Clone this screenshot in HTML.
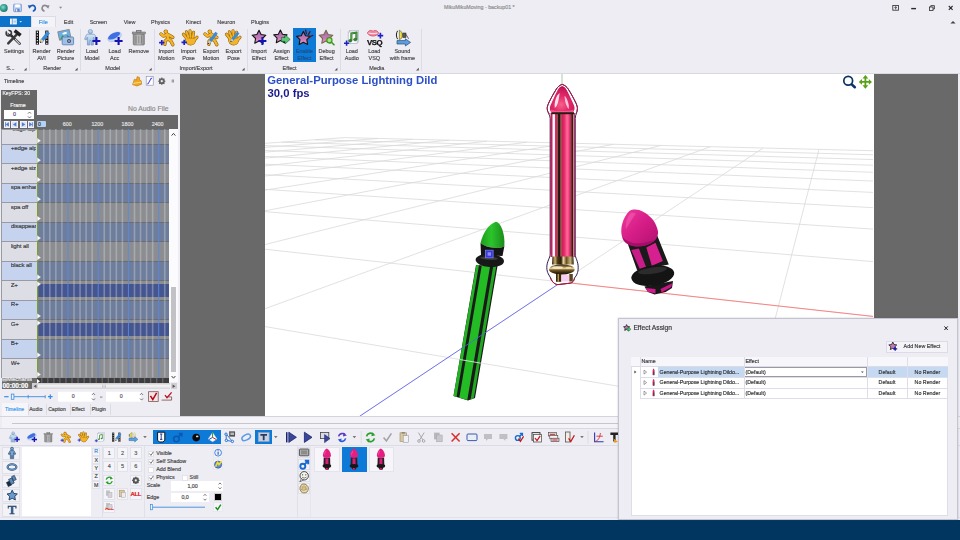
<!DOCTYPE html>
<html><head><meta charset="utf-8"><title>MikuMikuMoving</title>
<style>
html,body{margin:0;padding:0}
body{width:960px;height:540px;overflow:hidden;background:#ededf3;font-family:"Liberation Sans",sans-serif;font-size:6.4px;color:#3c3c3c;position:relative;line-height:1}
.a{position:absolute}
.t{position:absolute;white-space:nowrap;-webkit-text-stroke:.16px currentColor}
.c{position:absolute;white-space:nowrap;text-align:center;transform:translateX(-50%);-webkit-text-stroke:.16px currentColor}
svg{position:absolute;overflow:visible}
.sep{position:absolute;width:1px;background:#dcdce4}
#root{position:absolute;left:0;top:0;width:960px;height:540px;transform:translateZ(0)}
</style></head><body><div id="root">

<!-- ===== TITLE BAR ===== -->
<div id="titlebar" class="a" style="left:0;top:0;width:960px;height:16px;background:#ededf3">
<svg width="70" height="16" viewBox="0 0 70 16" style="left:0;top:0">
<defs><radialGradient id="gq" cx=".4" cy=".4" r=".7"><stop offset="0" stop-color="#8ad8c8"/><stop offset=".6" stop-color="#2a9a8a"/><stop offset="1" stop-color="#1a6a60"/></radialGradient></defs>
<circle cx="3.8" cy="8" r="3.9" fill="url(#gq)"/>
<rect x="13.6" y="4.2" width="7.8" height="7.4" rx=".6" fill="#c4d4f0" stroke="#7090d0" stroke-width=".8"/><rect x="15.2" y="4.4" width="4.6" height="2.8" fill="#fff"/><rect x="15.4" y="8.6" width="4.2" height="3" fill="#5a80c8"/><rect x="16" y="9.2" width="1.3" height="2.2" fill="#e8f0fc"/>
<path d="M30 6.8C31.6 4.6 34.6 5 35.2 7.4C35.6 9 34.8 10.4 33.4 11" fill="none" stroke="#1a5ab8" stroke-width="1.6" stroke-linecap="round"/><path d="M27.8 5.2L31.6 5.6L29.2 8.8Z" fill="#1a5ab8"/>
<path d="M47.4 6.8C45.8 4.6 42.8 5 42.2 7.4C41.8 9 42.6 10.4 44 11" fill="none" stroke="#8a8a90" stroke-width="1.6" stroke-linecap="round"/><path d="M49.6 5.2L45.8 5.6L48.2 8.8Z" fill="#8a8a90"/>
<path d="M59 6.8h3.2l-1.6 1.9z" fill="#8a8a8e"/></svg>
<div class="t" style="left:444px;top:4.6px;font-size:5.3px;color:#8c8c8c">MikuMikuMoving - backup01 *</div>
<svg width="70" height="10" viewBox="888 3 70 10" style="left:888px;top:3px"><g fill="none" stroke="#2a2a2a" stroke-width=".8">
<rect x="892.8" y="5.4" width="5.8" height="4.8"/><path d="M895.7 9.4V6.8M894.6 7.8L895.7 6.6L896.8 7.8"/>
<path d="M911.2 8.6h4.8" stroke-width="1.4"/>
<rect x="929.4" y="7" width="3.6" height="3.4"/><path d="M930.8 7V5.6H934.4V9H933"/>
<path d="M948.8 6L952.6 9.8M952.6 6L948.8 9.8" stroke-width="1.1"/></g></svg>
</div>

<!-- ===== TAB ROW ===== -->
<div id="tabrow" class="a" style="left:0;top:16px;width:960px;height:11px">
<div class="a" style="left:0;top:.2px;width:31.2px;height:10.8px;background:#0d72c9"></div>
<div class="a" style="left:31.2px;top:0;width:24.4px;height:11.5px;background:#f3f3f8;border:.6px solid #dcdce6;border-bottom:none;box-sizing:border-box"></div>
<svg width="31" height="11" viewBox="0 16 31 11" style="left:0;top:0"><rect x="10" y="18.6" width="6.8" height="5.8" fill="#f4f8fd"/><path d="M12.3 18.6v5.8" stroke="#3a7ac0" stroke-width=".7"/><path d="M13.4 20.2h2.6M13.4 21.5h2.6M13.4 22.8h2.6" stroke="#8ab0dc" stroke-width=".6"/><path d="M19.4 21.2h2.6l-1.3 1.4z" fill="#fff"/></svg>
<div class="c" style="left:43.3px;top:3.9px;font-size:5.5px;color:#3a96e8">File</div>
<div class="c" style="left:68.5px;top:3.9px;font-size:5.5px;color:#4a4a4a">Edit</div>
<div class="c" style="left:98.4px;top:3.9px;font-size:5.5px;color:#4a4a4a">Screen</div>
<div class="c" style="left:129.6px;top:3.9px;font-size:5.5px;color:#4a4a4a">View</div>
<div class="c" style="left:160.5px;top:3.9px;font-size:5.5px;color:#4a4a4a">Physics</div>
<div class="c" style="left:193.5px;top:3.9px;font-size:5.5px;color:#4a4a4a">Kinect</div>
<div class="c" style="left:226.3px;top:3.9px;font-size:5.5px;color:#4a4a4a">Neuron</div>
<div class="c" style="left:260.1px;top:3.9px;font-size:5.5px;color:#4a4a4a">Plugins</div>
<svg width="8" height="5" viewBox="0 0 8 5" style="left:948.5px;top:3.5px"><path d="M1.4 3.6L4 1L6.6 3.6Z" fill="#444"/></svg>
<div class="a" style="left:55.6px;top:10.6px;width:905px;height:.7px;background:#dcdce6"></div>
</div>

<!-- ===== RIBBON ===== -->
<div id="ribbon" class="a" style="left:0;top:27px;width:960px;height:46px;background:#ededf3;border-bottom:1px solid #d9d9e2">
<div class="a" style="left:293.2px;top:0.8999999999999986px;width:22.6px;height:34.1px;background:#0c7ad6"></div>
<div class="sep" style="left:29.2px;top:2px;height:42px"></div>
<div class="sep" style="left:80px;top:2px;height:42px"></div>
<div class="sep" style="left:153.6px;top:2px;height:42px"></div>
<div class="sep" style="left:247.3px;top:2px;height:42px"></div>
<div class="sep" style="left:340.2px;top:2px;height:42px"></div>
<div class="sep" style="left:421px;top:2px;height:42px"></div>
<div class="c" style="left:14px;top:22.200000000000003px;font-size:5.5px;color:#4a4a4a">Settings</div>
<div class="c" style="left:41.6px;top:22.200000000000003px;font-size:5.5px;color:#4a4a4a">Render</div>
<div class="c" style="left:41.6px;top:28.6px;font-size:5.5px;color:#4a4a4a">AVI</div>
<div class="c" style="left:65.7px;top:22.200000000000003px;font-size:5.5px;color:#4a4a4a">Render</div>
<div class="c" style="left:65.7px;top:28.6px;font-size:5.5px;color:#4a4a4a">Picture</div>
<div class="c" style="left:92px;top:22.200000000000003px;font-size:5.5px;color:#4a4a4a">Load</div>
<div class="c" style="left:92px;top:28.6px;font-size:5.5px;color:#4a4a4a">Model</div>
<div class="c" style="left:114.6px;top:22.200000000000003px;font-size:5.5px;color:#4a4a4a">Load</div>
<div class="c" style="left:114.6px;top:28.6px;font-size:5.5px;color:#4a4a4a">Acc</div>
<div class="c" style="left:138.8px;top:22.200000000000003px;font-size:5.5px;color:#4a4a4a">Remove</div>
<div class="c" style="left:166.2px;top:22.200000000000003px;font-size:5.5px;color:#4a4a4a">Import</div>
<div class="c" style="left:166.2px;top:28.6px;font-size:5.5px;color:#4a4a4a">Motion</div>
<div class="c" style="left:188.5px;top:22.200000000000003px;font-size:5.5px;color:#4a4a4a">Import</div>
<div class="c" style="left:188.5px;top:28.6px;font-size:5.5px;color:#4a4a4a">Pose</div>
<div class="c" style="left:211px;top:22.200000000000003px;font-size:5.5px;color:#4a4a4a">Export</div>
<div class="c" style="left:211px;top:28.6px;font-size:5.5px;color:#4a4a4a">Motion</div>
<div class="c" style="left:233.5px;top:22.200000000000003px;font-size:5.5px;color:#4a4a4a">Export</div>
<div class="c" style="left:233.5px;top:28.6px;font-size:5.5px;color:#4a4a4a">Pose</div>
<div class="c" style="left:259px;top:22.200000000000003px;font-size:5.5px;color:#4a4a4a">Import</div>
<div class="c" style="left:259px;top:28.6px;font-size:5.5px;color:#4a4a4a">Effect</div>
<div class="c" style="left:281.6px;top:22.200000000000003px;font-size:5.5px;color:#4a4a4a">Assign</div>
<div class="c" style="left:281.6px;top:28.6px;font-size:5.5px;color:#4a4a4a">Effect</div>
<div class="c" style="left:304.3px;top:22.200000000000003px;font-size:5.5px;color:#1f4e86">Enable</div>
<div class="c" style="left:304.3px;top:28.6px;font-size:5.5px;color:#1f4e86">Effect</div>
<div class="c" style="left:326.6px;top:22.200000000000003px;font-size:5.5px;color:#4a4a4a">Debug</div>
<div class="c" style="left:326.6px;top:28.6px;font-size:5.5px;color:#4a4a4a">Effect</div>
<div class="c" style="left:351.8px;top:22.200000000000003px;font-size:5.5px;color:#4a4a4a">Load</div>
<div class="c" style="left:351.8px;top:28.6px;font-size:5.5px;color:#4a4a4a">Audio</div>
<div class="c" style="left:374.3px;top:22.200000000000003px;font-size:5.5px;color:#4a4a4a">Load</div>
<div class="c" style="left:374.3px;top:28.6px;font-size:5.5px;color:#4a4a4a">VSQ</div>
<div class="c" style="left:402.4px;top:22.200000000000003px;font-size:5.5px;color:#4a4a4a">Sound</div>
<div class="c" style="left:402.4px;top:28.6px;font-size:5.5px;color:#4a4a4a">with frame</div>
<div class="c" style="left:52.2px;top:38.8px;font-size:5.5px;color:#4a4a4a">Render</div>
<div class="c" style="left:112.8px;top:38.8px;font-size:5.5px;color:#4a4a4a">Model</div>
<div class="c" style="left:196px;top:38.8px;font-size:5.5px;color:#4a4a4a">Import/Export</div>
<div class="c" style="left:289.6px;top:38.8px;font-size:5.5px;color:#4a4a4a">Effect</div>
<div class="c" style="left:376.8px;top:38.8px;font-size:5.5px;color:#4a4a4a">Media</div>
<div class="t" style="left:6.2px;top:38.8px;font-size:5.5px;color:#4a4a4a">S...</div>
<svg width="430" height="46" viewBox="0 27 430 46" style="left:0;top:0"><defs><linearGradient id="gstar" x1="0" x2="0" y1="0" y2="1"><stop offset="0" stop-color="#9a6aa8"/><stop offset=".6" stop-color="#c87ab8"/><stop offset="1" stop-color="#e8a0c8"/></linearGradient><linearGradient id="gfig" x1="0" x2="0" y1="0" y2="1"><stop offset="0" stop-color="#d8e8f8"/><stop offset="1" stop-color="#8ab0dc"/></linearGradient><linearGradient id="gtrash" x1="0" x2="1" y1="0" y2="0"><stop offset="0" stop-color="#8c8c8c"/><stop offset=".5" stop-color="#c8c8c8"/><stop offset="1" stop-color="#8a8a8a"/></linearGradient></defs><path d="M26.599999999999998 67.8V70.6H23.8Z" fill="#555"/><path d="M77.60000000000001 67.8V70.6H74.8Z" fill="#555"/><path d="M151.70000000000002 67.8V70.6H148.9Z" fill="#555"/><path d="M244.6 67.8V70.6H241.79999999999998Z" fill="#555"/><path d="M337.4 67.8V70.6H334.6Z" fill="#555"/><path d="M418.79999999999995 67.8V70.6H416.0Z" fill="#555"/><g stroke-linecap="round"><path d="M9 33.4L19.6 43.6" stroke="#2c2c2c" stroke-width="2.6"/><path d="M8.2 43.4L17.6 33.6" stroke="#3a3a3a" stroke-width="2.4"/><path d="M14.6 30.6L20.6 35.4" stroke="#222" stroke-width="3.4" stroke-linecap="butt"/><circle cx="8.8" cy="33.2" r="2.6" fill="none" stroke="#3a3a3a" stroke-width="1.7"/><path d="M7 30.4L9.6 33" stroke="#ededf3" stroke-width="1.8"/><path d="M15.4 39.4L19.4 43.6" stroke="#d8d8d8" stroke-width="1.2"/></g><rect x="35.8" y="30.6" width="12.6" height="14" fill="#f4f4f4"/><rect x="35.8" y="30.6" width="3.2" height="14" fill="#161616"/><rect x="45.2" y="30.6" width="3.2" height="14" fill="#161616"/><path d="M37.4 31.6v13M46.8 31.6v13" stroke="#e8e8e8" stroke-width="1.2" stroke-dasharray="1.3 1.5"/><path d="M40.6 42.2L48.6 32.2" stroke="#3a8ad8" stroke-width="3.4" stroke-linecap="butt"/><path d="M40.6 42.2L42.36 40.00" stroke="#f0c890" stroke-width="2.72"/><circle cx="40.6" cy="42.2" r=".7" fill="#333"/><g transform="rotate(-12 64 35)"><rect x="58.6" y="30.6" width="11.6" height="8.6" fill="#6ab0e8" stroke="#8a8a8a" stroke-width=".9"/><path d="M59.2 38.6L62.4 35L65 37.4L67 35.6L69.6 38.6Z" fill="#3a9a3a"/><ellipse cx="65" cy="33.4" rx="2.4" ry="1.1" fill="#fff"/></g><rect x="62.2" y="37" width="11.4" height="7.8" rx="1" fill="#9cc0ec" stroke="#5a7aa8" stroke-width=".8"/><rect x="63.6" y="35.8" width="3.4" height="1.6" fill="#7a9ccc"/><circle cx="69" cy="41" r="2.5" fill="#3a4a6a" stroke="#d8e4f4" stroke-width=".7"/><circle cx="69" cy="41" r="1" fill="#8ab0e0"/><g transform="translate(92 37.6)"><g fill="url(#gfig)" stroke="#7a9cc0" stroke-width=".8" stroke-linejoin="round"><circle cx="-1.6" cy="-6" r="2.1"/><path d="M-4.4 -3.4H1.2C2.4 -3.4 3 -2.8 3.4 -1.8L4.8 1.6L3 2.4L1.4 -.4V7.4H-1V3H-2.2V7.4H-4.6V-.4L-5.8 2.4L-7.4 1.6L-6 -1.8C-5.6 -2.8 -5.4 -3.4 -4.4 -3.4Z"/></g><path d="M0.40000000000000036 3.4H8.4M4.4 -0.6000000000000001V7.4" stroke="#1414b4" stroke-width="2.1" fill="none"/></g><g transform="translate(114.6 37.6)"><g transform="rotate(-27 -.4 -1.6)"><ellipse cx="-.4" cy="-.6" rx="7.4" ry="3.9" fill="#c4d8f6" stroke="#9ab4dc" stroke-width=".5"/><ellipse cx="-.4" cy="-1.9" rx="6.6" ry="2.7" fill="#3f6fe4"/><ellipse cx="-.4" cy="-.9" rx="4.6" ry="1.2" fill="#c4d8f6" opacity=".0"/></g><path d="M0 3.4H8M4 -0.6000000000000001V7.4" stroke="#1414b4" stroke-width="2.1" fill="none"/></g><rect x="133.2" y="34" width="11.2" height="11" rx="1" fill="url(#gtrash)" stroke="#6a6a6a" stroke-width=".6"/><rect x="132.2" y="32" width="13.2" height="2" fill="#9a9a9a" stroke="#666" stroke-width=".5"/><rect x="136.6" y="30.4" width="4.4" height="1.6" fill="none" stroke="#666" stroke-width=".8"/><path d="M136 35.6v8M138.8 35.6v8M141.6 35.6v8" stroke="#777" stroke-width=".8"/><g transform="translate(167.4 37.6)" fill="none" stroke-linecap="round" stroke-linejoin="round"><path d="M-0.4 -3.6L0.6 1L3.6 3.6L5.4 7M0.6 1L-2.2 3.4L-2.6 6.6M-0.2 -3L-4 -1.6L-6.4 -3.6M0 -3.2L3.2 -1.6L5.4 -0.2" stroke="#94640a" stroke-width="3.5"/><circle cx="-1.6" cy="-6" r="2.2" fill="#94640a"/><path d="M-0.4 -3.6L0.6 1L3.6 3.6L5.4 7M0.6 1L-2.2 3.4L-2.6 6.6M-0.2 -3L-4 -1.6L-6.4 -3.6M0 -3.2L3.2 -1.6L5.4 -0.2" stroke="#f4b428" stroke-width="2.3"/><circle cx="-1.6" cy="-6" r="1.6" fill="#f4b428"/></g><path d="M159.10000000000002 42.6H164.5M161.8 39.9V45.300000000000004" stroke="#2020c8" stroke-width="1.7" fill="none"/><g transform="translate(190 37.8)" fill="none" stroke-linecap="round" stroke-linejoin="round"><path d="M-3.4 0.6L-6.6 -3.6M-1.6 -0.6L-3.6 -6M0.6 -1L0 -7M2.8 -0.4L3.6 -5.6M4 3L7 -0.6" stroke="#94640a" stroke-width="3.1"/><path d="M-4 0.4C-5 4.6 -2.4 7 0.8 7C4 7 6 4.4 5 0.6Z" fill="#94640a" stroke="#94640a" stroke-width="1.2"/><path d="M-3.4 0.6L-6.6 -3.6M-1.6 -0.6L-3.6 -6M0.6 -1L0 -7M2.8 -0.4L3.6 -5.6M4 3L7 -0.6" stroke="#f4b428" stroke-width="1.9"/><path d="M-4 0.4C-5 4.6 -2.4 7 0.8 7C4 7 6 4.4 5 0.6Z" fill="#f4b428"/></g><path d="M181.5 42.4H186.89999999999998M184.2 39.699999999999996V45.1" stroke="#2020c8" stroke-width="1.7" fill="none"/><g transform="translate(211.4 37.6)" fill="none" stroke-linecap="round" stroke-linejoin="round"><path d="M-0.4 -3.6L0.6 1L3.6 3.6L5.4 7M0.6 1L-2.2 3.4L-2.6 6.6M-0.2 -3L-4 -1.6L-6.4 -3.6M0 -3.2L3.2 -1.6L5.4 -0.2" stroke="#94640a" stroke-width="3.5"/><circle cx="-1.6" cy="-6" r="2.2" fill="#94640a"/><path d="M-0.4 -3.6L0.6 1L3.6 3.6L5.4 7M0.6 1L-2.2 3.4L-2.6 6.6M-0.2 -3L-4 -1.6L-6.4 -3.6M0 -3.2L3.2 -1.6L5.4 -0.2" stroke="#f4b428" stroke-width="2.3"/><circle cx="-1.6" cy="-6" r="1.6" fill="#f4b428"/></g><path d="M208.4 43.4L216.6 32.6" stroke="#3a8ad8" stroke-width="3" stroke-linecap="butt"/><path d="M208.4 43.4L210.20 41.02" stroke="#f0c890" stroke-width="2.40"/><circle cx="208.4" cy="43.4" r=".7" fill="#333"/><g transform="translate(233 37.8)" fill="none" stroke-linecap="round" stroke-linejoin="round"><path d="M-3.4 0.6L-6.6 -3.6M-1.6 -0.6L-3.6 -6M0.6 -1L0 -7M2.8 -0.4L3.6 -5.6M4 3L7 -0.6" stroke="#94640a" stroke-width="3.1"/><path d="M-4 0.4C-5 4.6 -2.4 7 0.8 7C4 7 6 4.4 5 0.6Z" fill="#94640a" stroke="#94640a" stroke-width="1.2"/><path d="M-3.4 0.6L-6.6 -3.6M-1.6 -0.6L-3.6 -6M0.6 -1L0 -7M2.8 -0.4L3.6 -5.6M4 3L7 -0.6" stroke="#f4b428" stroke-width="1.9"/><path d="M-4 0.4C-5 4.6 -2.4 7 0.8 7C4 7 6 4.4 5 0.6Z" fill="#f4b428"/></g><path d="M231 41.4L238.4 32.6" stroke="#3a8ad8" stroke-width="2.8" stroke-linecap="butt"/><path d="M231 41.4L232.63 39.46" stroke="#f0c890" stroke-width="2.24"/><circle cx="231" cy="41.4" r=".7" fill="#333"/><path d="M259.00 30.20L261.12 34.49L265.85 35.18L262.42 38.51L263.23 43.22L259.00 41.00L254.77 43.22L255.58 38.51L252.15 35.18L256.88 34.49Z" fill="url(#gstar)" stroke="#141414" stroke-width="1.1" stroke-linejoin="round"/><path d="M258.4 41H266.4M262.4 37V45" stroke="#1414b4" stroke-width="2" fill="none"/><path d="M280.40 30.00L282.46 34.17L287.06 34.84L283.73 38.08L284.51 42.66L280.40 40.50L276.29 42.66L277.07 38.08L273.74 34.84L278.34 34.17Z" fill="url(#gstar)" stroke="#141414" stroke-width="1.1" stroke-linejoin="round"/><path d="M281.4 37.4H285V34.8L290.2 39.4L285 44V41.4H281.4Z" fill="#58c878" stroke="#1a5a2a" stroke-width=".6"/><path d="M303.40 31.40L305.52 35.69L310.25 36.38L306.82 39.71L307.63 44.42L303.40 42.20L299.17 44.42L299.98 39.71L296.55 36.38L301.28 35.69Z" fill="url(#gstar)" stroke="#141414" stroke-width="1.1" stroke-linejoin="round"/><path d="M306.4 33.6L305.6 30.2M308.4 34.6L310 31.6M309.6 36.8L312.8 35.4" stroke="#5a1420" stroke-width="1.3" stroke-linecap="round"/><path d="M326.00 30.20L328.12 34.49L332.85 35.18L329.42 38.51L330.23 43.22L326.00 41.00L321.77 43.22L322.58 38.51L319.15 35.18L323.88 34.49Z" fill="url(#gstar)" stroke="#7a6a4a" stroke-width="1.1" stroke-linejoin="round"/><circle cx="329.4" cy="40.2" r="2.6" fill="#a8e088" stroke="#3a9a1a" stroke-width="1.2"/><path d="M331.4 42.2L334 44.8" stroke="#3a9a1a" stroke-width="1.6" stroke-linecap="round"/><rect x="349.6" y="30.4" width="9" height="11.6" fill="#fff" stroke="#b0b8c8" stroke-width=".7"/><rect x="348.2" y="32" width="9" height="11.6" fill="#fcfcfc" stroke="#a8b0c0" stroke-width=".7"/><path d="M351.4 40.6V33.6L356.4 32.6V39.4" fill="none" stroke="#1a5a1a" stroke-width="1.9"/><path d="M351.4 40.6V33.6L356.4 32.6V39.4" fill="none" stroke="#4ab03a" stroke-width="1"/><ellipse cx="350.2" cy="40.8" rx="1.7" ry="1.4" fill="#2a8a2a" stroke="#1a4a1a" stroke-width=".4"/><ellipse cx="355.2" cy="39.6" rx="1.7" ry="1.4" fill="#2a8a2a" stroke="#1a4a1a" stroke-width=".4"/><path d="M344.0 43.2H349.20000000000005M346.6 40.6V45.800000000000004" stroke="#2020c8" stroke-width="1.6" fill="none"/><path d="M367.4 33C368.8 30 371.6 29.8 373 31.4C374.4 29.8 377.2 30 378.6 33C376.8 37 369.2 37 367.4 33Z" fill="#f4869e" stroke="#c43c58" stroke-width=".7"/><path d="M368.4 33.1Q373 34.4 377.6 33.1" stroke="#fff" stroke-width=".8" fill="none"/><text x="374.6" y="44.9" font-family="Liberation Sans" font-weight="bold" font-size="7.9" text-anchor="middle" fill="#111" stroke="#111" stroke-width=".25" letter-spacing="-.45">VSQ</text><path d="M377.59999999999997 35.6H383.2M380.4 32.800000000000004V38.4" stroke="#2020c8" stroke-width="1.6" fill="none"/><path d="M397.6 30.8C396 33 396 37 397.6 39.2" fill="none" stroke="#222" stroke-width="1"/><path d="M399.4 30.2C402.8 31.4 403.6 38.4 399.4 39.8Z" fill="#f0e040" stroke="#5a5a2a" stroke-width=".6"/><rect x="402.8" y="33" width="3.2" height="4.6" fill="#5a5a4a" stroke="#222" stroke-width=".5"/><path d="M406 34.4L408.6 38.8" stroke="#444" stroke-width=".8"/><path d="M397 40.6H405.4V38.8L410.6 42.4L405.4 46V44H397Z" fill="#5aa0e0" stroke="#2a4a7a" stroke-width=".7"/></svg>
</div>

<!-- ===== TIMELINE PANEL ===== -->
<div id="timeline" class="a" style="left:0;top:74px;width:178px;height:342px;background:#ededf3">
<div class="t" style="left:4px;top:4.599999999999994px;font-size:5.4px;color:#444">Timeline</div>
<svg width="44" height="12" viewBox="132 75 44 12" style="left:132px;top:1px">
<path d="M132.6 84.6L134.4 79.2L136.4 80L137.2 76.6L139.4 77.4L139.6 80.2L141.2 80.8L141.6 84.2L137 86Z" fill="#f0a820" stroke="#b87408" stroke-width=".6"/>
<path d="M133.2 83.4L141 82.2" stroke="#fff0b0" stroke-width=".7"/>
<rect x="146.2" y="76.6" width="7" height="8.6" fill="#fff" stroke="#8a8ab0" stroke-width=".6"/>
<path d="M147.2 84C149.6 84 149.6 78 152.2 78" fill="none" stroke="#4444e8" stroke-width="1.1"/>
<g transform="translate(161.8 81.2)"><circle r="2.3" fill="none" stroke="#606060" stroke-width="1.4"/><g stroke="#606060" stroke-width="1.1"><path d="M0 -3.6V3.6M-3.6 0H3.6M-2.6 -2.6L2.6 2.6M-2.6 2.6L2.6 -2.6"/></g><circle r="1.1" fill="#ededf3"/></g>
<path d="M172.2 79.5v3M173.4 79.5v3" stroke="#666" stroke-width=".7"/>
</svg>
<div class="a" style="left:1.3px;top:15.900000000000006px;width:35.4px;height:39.6px;background:#676767"></div>
<div class="t" style="left:2.4px;top:17.299999999999997px;font-size:5.2px;color:#f2f2f2">KeyFPS: 30</div>
<div class="c" style="left:18px;top:29px;font-size:5.4px;color:#f6f6f6">Frame</div>
<div class="a" style="left:3.9px;top:35.900000000000006px;width:30px;height:9.4px;background:#fff"></div>
<div class="c" style="left:14.6px;top:38.2px;font-size:5.4px;color:#5a4070">0</div>
<svg width="5" height="8" viewBox="0 0 5 8" style="left:27px;top:36.8px"><path d="M1 2.6L2.5 1L4 2.6M1 5.4L2.5 7L4 5.4" fill="none" stroke="#555" stroke-width=".8"/></svg>
<div class="a" style="left:3.9px;top:47px;width:6.1px;height:6.7px;background:#dfe3ee;border:.5px solid #f4f4f8;box-sizing:border-box"></div>
<div class="a" style="left:11.1px;top:47px;width:6.9px;height:6.7px;background:#dfe3ee;border:.5px solid #f4f4f8;box-sizing:border-box"></div>
<div class="a" style="left:20px;top:47px;width:6.7px;height:6.7px;background:#dfe3ee;border:.5px solid #f4f4f8;box-sizing:border-box"></div>
<div class="a" style="left:27.5px;top:47px;width:6.4px;height:6.7px;background:#dfe3ee;border:.5px solid #f4f4f8;box-sizing:border-box"></div>
<svg width="32" height="7" viewBox="3.9 121 32 7" style="left:3.9px;top:47px"><g fill="#4a7cd4">
<path d="M8.8 122.3L5.6 124.4L8.8 126.5Z"/><rect x="4.9" y="122.3" width=".8" height="4.2"/>
<path d="M16.2 122.3L12.8 124.4L16.2 126.5Z"/>
<path d="M21.8 122.3L25.2 124.4L21.8 126.5Z"/>
<path d="M29 122.3L32.2 124.4L29 126.5Z"/><rect x="32.2" y="122.3" width=".8" height="4.2"/></g></svg>
<div class="t" style="left:128px;top:31.799999999999997px;font-size:6.8px;color:#8a8a8a">No Audio File</div>
<div class="a" style="left:36.7px;top:41.099999999999994px;width:141.3px;height:14.4px;background:#686868"></div>
<div class="a" style="left:36.9px;top:47.3px;width:9.2px;height:5.6px;background:#b4d0f2;border-radius:1px"></div>
<div class="t" style="left:38px;top:47.7px;font-size:5.2px;color:#234">0</div>
<div class="c" style="left:67.2px;top:47.7px;font-size:5.3px;color:#e4e4e8">600</div>
<div class="c" style="left:97.3px;top:47.7px;font-size:5.3px;color:#e4e4e8">1200</div>
<div class="c" style="left:127.5px;top:47.7px;font-size:5.3px;color:#e4e4e8">1800</div>
<div class="c" style="left:157.6px;top:47.7px;font-size:5.3px;color:#e4e4e8">2400</div>
<div class="a" style="left:1.5px;top:55.400000000000006px;width:167.5px;height:248.5px;overflow:hidden;background:#8b8d91">
<div class="a" style="left:0;top:0.00px;width:35px;height:14.50px;background:#dddde6;border-top:.6px solid #9a9aa4;box-sizing:border-box"></div>
<div class="a" style="left:35px;top:0.00px;width:133px;height:14.50px;background:#8b8d91;border-top:.6px solid #6a6c74;box-sizing:border-box"></div>
<div class="a" style="left:0;top:14.50px;width:35px;height:19.48px;background:#c6d3ef;border-top:.6px solid #9a9aa4;box-sizing:border-box"></div>
<div class="a" style="left:35px;top:14.50px;width:133px;height:19.48px;background:#6d7d9b;border-top:.6px solid #6a6c74;box-sizing:border-box"></div>
<div class="t" style="left:9.2px;top:16.00px;font-size:6.15px;letter-spacing:-.12px;color:#3a3a3a;width:25.8px;overflow:hidden">+edge alp</div>
<div class="a" style="left:0;top:33.98px;width:35px;height:19.48px;background:#dddde6;border-top:.6px solid #9a9aa4;box-sizing:border-box"></div>
<div class="a" style="left:35px;top:33.98px;width:133px;height:19.48px;background:#8b8d91;border-top:.6px solid #6a6c74;box-sizing:border-box"></div>
<div class="t" style="left:9.2px;top:35.48px;font-size:6.15px;letter-spacing:-.12px;color:#3a3a3a;width:25.8px;overflow:hidden">+edge siz</div>
<div class="a" style="left:0;top:53.46px;width:35px;height:19.48px;background:#c6d3ef;border-top:.6px solid #9a9aa4;box-sizing:border-box"></div>
<div class="a" style="left:35px;top:53.46px;width:133px;height:19.48px;background:#6d7d9b;border-top:.6px solid #6a6c74;box-sizing:border-box"></div>
<div class="t" style="left:9.2px;top:54.96px;font-size:6.15px;letter-spacing:-.12px;color:#3a3a3a;width:25.8px;overflow:hidden">spa enhar</div>
<div class="a" style="left:0;top:72.94px;width:35px;height:19.48px;background:#dddde6;border-top:.6px solid #9a9aa4;box-sizing:border-box"></div>
<div class="a" style="left:35px;top:72.94px;width:133px;height:19.48px;background:#8b8d91;border-top:.6px solid #6a6c74;box-sizing:border-box"></div>
<div class="t" style="left:9.2px;top:74.44px;font-size:6.15px;letter-spacing:-.12px;color:#3a3a3a;width:25.8px;overflow:hidden">spa off</div>
<div class="a" style="left:0;top:92.42px;width:35px;height:19.48px;background:#c6d3ef;border-top:.6px solid #9a9aa4;box-sizing:border-box"></div>
<div class="a" style="left:35px;top:92.42px;width:133px;height:19.48px;background:#6d7d9b;border-top:.6px solid #6a6c74;box-sizing:border-box"></div>
<div class="t" style="left:9.2px;top:93.92px;font-size:6.15px;letter-spacing:-.12px;color:#3a3a3a;width:25.8px;overflow:hidden">disappear</div>
<div class="a" style="left:0;top:111.90px;width:35px;height:19.48px;background:#dddde6;border-top:.6px solid #9a9aa4;box-sizing:border-box"></div>
<div class="a" style="left:35px;top:111.90px;width:133px;height:19.48px;background:#8b8d91;border-top:.6px solid #6a6c74;box-sizing:border-box"></div>
<div class="t" style="left:9.2px;top:113.40px;font-size:6.15px;letter-spacing:-.12px;color:#3a3a3a;width:25.8px;overflow:hidden">light all</div>
<div class="a" style="left:0;top:131.38px;width:35px;height:19.48px;background:#c6d3ef;border-top:.6px solid #9a9aa4;box-sizing:border-box"></div>
<div class="a" style="left:35px;top:131.38px;width:133px;height:19.48px;background:#6d7d9b;border-top:.6px solid #6a6c74;box-sizing:border-box"></div>
<div class="t" style="left:9.2px;top:132.88px;font-size:6.15px;letter-spacing:-.12px;color:#3a3a3a;width:25.8px;overflow:hidden">black all</div>
<div class="a" style="left:0;top:150.86px;width:35px;height:19.48px;background:#dddde6;border-top:.6px solid #9a9aa4;box-sizing:border-box"></div>
<div class="a" style="left:35px;top:150.86px;width:133px;height:19.48px;background:#8b8d91;border-top:.6px solid #6a6c74;box-sizing:border-box"></div>
<div class="t" style="left:9.2px;top:152.36px;font-size:6.15px;letter-spacing:-.12px;color:#3a3a3a;width:25.8px;overflow:hidden">Z+</div>
<div class="a" style="left:36px;top:155.06px;width:132px;height:12.6px;background:#45558f"></div>
<div class="a" style="left:0;top:170.34px;width:35px;height:19.48px;background:#c6d3ef;border-top:.6px solid #9a9aa4;box-sizing:border-box"></div>
<div class="a" style="left:35px;top:170.34px;width:133px;height:19.48px;background:#6d7d9b;border-top:.6px solid #6a6c74;box-sizing:border-box"></div>
<div class="t" style="left:9.2px;top:171.84px;font-size:6.15px;letter-spacing:-.12px;color:#3a3a3a;width:25.8px;overflow:hidden">R+</div>
<div class="a" style="left:0;top:189.82px;width:35px;height:19.48px;background:#dddde6;border-top:.6px solid #9a9aa4;box-sizing:border-box"></div>
<div class="a" style="left:35px;top:189.82px;width:133px;height:19.48px;background:#8b8d91;border-top:.6px solid #6a6c74;box-sizing:border-box"></div>
<div class="t" style="left:9.2px;top:191.32px;font-size:6.15px;letter-spacing:-.12px;color:#3a3a3a;width:25.8px;overflow:hidden">G+</div>
<div class="a" style="left:36px;top:194.02px;width:132px;height:12.6px;background:#45558f"></div>
<div class="a" style="left:0;top:209.30px;width:35px;height:19.48px;background:#c6d3ef;border-top:.6px solid #9a9aa4;box-sizing:border-box"></div>
<div class="a" style="left:35px;top:209.30px;width:133px;height:19.48px;background:#6d7d9b;border-top:.6px solid #6a6c74;box-sizing:border-box"></div>
<div class="t" style="left:9.2px;top:210.80px;font-size:6.15px;letter-spacing:-.12px;color:#3a3a3a;width:25.8px;overflow:hidden">B+</div>
<div class="a" style="left:0;top:228.78px;width:35px;height:19.48px;background:#dddde6;border-top:.6px solid #9a9aa4;box-sizing:border-box"></div>
<div class="a" style="left:35px;top:228.78px;width:133px;height:19.48px;background:#8b8d91;border-top:.6px solid #6a6c74;box-sizing:border-box"></div>
<div class="t" style="left:9.2px;top:230.28px;font-size:6.15px;letter-spacing:-.12px;color:#3a3a3a;width:25.8px;overflow:hidden">W+</div>
<div class="t" style="left:9.2px;top:-3.48px;font-size:6.15px;letter-spacing:-.12px;color:#3a3a3a;width:25.8px;overflow:hidden;clip-path:inset(4.4px 0 0 0)">-edge alp</div>
<svg width="134" height="248.5" viewBox="35 0 134 248.5" style="left:35px;top:0"><path d="M41.75 0V248.5M47.80 0V248.5M53.85 0V248.5M59.90 0V248.5M72.00 0V248.5M78.05 0V248.5M84.10 0V248.5M90.15 0V248.5M102.25 0V248.5M108.30 0V248.5M114.35 0V248.5M120.40 0V248.5M132.50 0V248.5M138.55 0V248.5M144.60 0V248.5M150.65 0V248.5M162.75 0V248.5" stroke="#d8dce4" stroke-opacity=".36" stroke-width="1.6"/><path d="M65.95 0V248.5M96.20 0V248.5M126.45 0V248.5M156.70 0V248.5" stroke="#5b8ae0" stroke-width=".9"/><rect x="35" y="0" width="1.3" height="248.5" fill="#7c9c3c"/><path d="M35.2 9.10L38.8 11.70L35.2 14.30Z" fill="#fff" stroke="#aaa" stroke-width=".3"/><path d="M35.2 28.58L38.8 31.18L35.2 33.78Z" fill="#fff" stroke="#aaa" stroke-width=".3"/><path d="M35.2 48.06L38.8 50.66L35.2 53.26Z" fill="#fff" stroke="#aaa" stroke-width=".3"/><path d="M35.2 67.54L38.8 70.14L35.2 72.74Z" fill="#fff" stroke="#aaa" stroke-width=".3"/><path d="M35.2 87.02L38.8 89.62L35.2 92.22Z" fill="#fff" stroke="#aaa" stroke-width=".3"/><path d="M35.2 106.50L38.8 109.10L35.2 111.70Z" fill="#fff" stroke="#aaa" stroke-width=".3"/><path d="M35.2 125.98L38.8 128.58L35.2 131.18Z" fill="#fff" stroke="#aaa" stroke-width=".3"/><path d="M35.2 145.46L38.8 148.06L35.2 150.66Z" fill="#fff" stroke="#aaa" stroke-width=".3"/><path d="M35.2 152.46L38.8 155.06L35.2 157.66Z" fill="#fff" stroke="#aaa" stroke-width=".3"/><path d="M35.2 184.42L38.8 187.02L35.2 189.62Z" fill="#fff" stroke="#aaa" stroke-width=".3"/><path d="M35.2 191.42L38.8 194.02L35.2 196.62Z" fill="#fff" stroke="#aaa" stroke-width=".3"/><path d="M35.2 223.38L38.8 225.98L35.2 228.58Z" fill="#fff" stroke="#aaa" stroke-width=".3"/><path d="M35.2 242.86L38.8 245.46L35.2 248.06Z" fill="#fff" stroke="#aaa" stroke-width=".3"/></svg>
</div>
<div class="a" style="left:1.4px;top:55.400000000000006px;width:1.1px;height:248.5px;background:#9a9aa2"></div>
<div class="a" style="left:1.5px;top:303.9px;width:35.2px;height:11.6px;background:#6c6c6c"></div>
<div class="a" style="left:36.7px;top:303.9px;width:132.3px;height:4.9px;background:#3c3c3e;overflow:hidden"><svg width="134" height="5" viewBox="35 0 134 5" style="left:-1.7px;top:0"><path d="M41.75 0V248.5M47.80 0V248.5M53.85 0V248.5M59.90 0V248.5M72.00 0V248.5M78.05 0V248.5M84.10 0V248.5M90.15 0V248.5M102.25 0V248.5M108.30 0V248.5M114.35 0V248.5M120.40 0V248.5M132.50 0V248.5M138.55 0V248.5M144.60 0V248.5M150.65 0V248.5M162.75 0V248.5M65.95 0V248.5M96.20 0V248.5M126.45 0V248.5M156.70 0V248.5" stroke="#fff" stroke-opacity=".22" stroke-width="1.3"/></svg></div>
<div class="t" style="left:2px;top:303.4px;font-size:5.9px;color:#f0f0f0;height:5.4px;overflow:hidden">&#8863;Mechanis</div>
<div class="t" style="left:2.5px;top:309.2px;font-size:6.6px;color:#fff;font-weight:bold;letter-spacing:-.1px">00:00:00</div>
<svg width="4" height="5" viewBox="0 0 4 5" style="left:36.6px;top:304.5px"><path d="M0 0L3 2.2L0 4.4Z" fill="#fff"/></svg>
<div class="a" style="left:32px;top:308.8px;width:6px;height:6.5px;background:#d0d0d4"></div>
<div class="a" style="left:38.4px;top:308.8px;width:132px;height:6.5px;background:linear-gradient(#c8c8cc,#f4f4f6 45%,#d4d4d8)"></div>
<div class="a" style="left:171px;top:308.8px;width:6px;height:6.5px;background:#d0d0d4"></div>
<svg width="146" height="7" viewBox="32 382.8 146 7" style="left:32px;top:308.8px"><path d="M36.4 384.2L33.6 386L36.4 387.8Z M172.6 384.2L175.4 386L172.6 387.8Z" fill="#555"/><path d="M102.5 384.6v3M104 384.6v3M105.5 384.6v3" stroke="#aaa" stroke-width=".5"/></svg>
<div class="a" style="left:169px;top:55.400000000000006px;width:9px;height:253px;background:#fbfbfd"></div>
<div class="a" style="left:170.8px;top:213px;width:5.6px;height:85px;background:#c2c2c6"></div>
<svg width="9" height="253" viewBox="169 129.4 9 253" style="left:169px;top:55.400000000000006px"><path d="M171.6 136L173.5 133.8L175.4 136M171.6 376.4L173.5 378.6L175.4 376.4" fill="none" stroke="#333" stroke-width=".9"/></svg>
<svg width="178" height="14" viewBox="0 389.5 178 14" style="left:0;top:315.5px">
<path d="M4.2 396.2H8.6" stroke="#3a8ce0" stroke-width="1.2"/>
<path d="M12 396.2H45.4" stroke="#3a8ce0" stroke-width=".9"/><path d="M28.2 394.4v3.6M45.2 394.6v3.2" stroke="#3a8ce0" stroke-width=".8"/>
<rect x="11.3" y="393.6" width="2.6" height="5.2" fill="#eef4fc" stroke="#3a8ce0" stroke-width=".8"/>
<path d="M48 396.2H52.6M50.3 393.9V398.5" stroke="#3a8ce0" stroke-width="1.3"/>
<rect x="58" y="391.2" width="35" height="10" fill="#fff"/><rect x="106" y="391.2" width="35" height="10" fill="#fff"/>
<path d="M92 394.4L93.5 392.8L95 394.4M92 398L93.5 399.6L95 398M140 394.4L141.5 392.8L143 394.4M140 398L141.5 399.6L143 398" fill="none" stroke="#555" stroke-width=".8"/>
<path d="M100 396.6h2.4" stroke="#555" stroke-width=".7"/>
<rect x="148.6" y="391.2" width="9.6" height="9.8" fill="#f6e4e4" stroke="#7a5a5a" stroke-width=".8"/>
<path d="M150.4 395.4L152.8 399L156.6 392.4" fill="none" stroke="#b00818" stroke-width="1.5"/>
<path d="M161.6 399.6H171.6V396.4H166.4" fill="none" stroke="#7a4a4a" stroke-width=".8"/><path d="M165 394.6L167 397.2L171.6 391.8" fill="none" stroke="#c01020" stroke-width="1.3"/>
</svg>
<div class="c" style="left:73.2px;top:319.8px;font-size:5.3px;color:#5a4a6a">0</div>
<div class="c" style="left:121.2px;top:319.8px;font-size:5.3px;color:#5a4a6a">0</div>
<div class="a" style="left:1.5px;top:329.4px;width:26.5px;height:12.2px;background:#f6f6fa"></div>
<div class="t" style="left:5px;top:333px;font-size:5.1px;color:#3a96e8">Timeline</div>
<div class="t" style="left:29.2px;top:333px;font-size:5.1px;color:#444">Audio</div>
<div class="t" style="left:48.2px;top:333px;font-size:5.1px;color:#444">Caption</div>
<div class="t" style="left:71.8px;top:333px;font-size:5.1px;color:#444">Effect</div>
<div class="t" style="left:91.8px;top:333px;font-size:5.1px;color:#444">Plugin</div>
<div class="a" style="left:28.2px;top:330px;width:.6px;height:11px;background:#dcdce4"></div>
<div class="a" style="left:46.3px;top:330px;width:.6px;height:11px;background:#dcdce4"></div>
<div class="a" style="left:70.4px;top:330px;width:.6px;height:11px;background:#dcdce4"></div>
<div class="a" style="left:90.4px;top:330px;width:.6px;height:11px;background:#dcdce4"></div>
<div class="a" style="left:109.6px;top:330px;width:.6px;height:11px;background:#dcdce4"></div>
</div>

<!-- ===== VIEWPORT ===== -->
<div class="a" style="left:180.3px;top:74px;width:85px;height:342px;background:#696969"></div>
<div class="a" style="left:873px;top:74px;width:85.4px;height:246px;background:#696969"></div>
<div id="viewport" class="a" style="left:265px;top:74px;width:608.7px;height:342px;background:#fff;overflow:hidden">
<svg width="608" height="342" viewBox="265 74 608 342" style="left:0;top:0;overflow:hidden;transform:translateZ(0)">
<defs>
<linearGradient id="shaft" x1="0" x2="1" y1="0" y2="0">
<stop offset="0" stop-color="#b0104a"/><stop offset=".06" stop-color="#e02464"/><stop offset=".10" stop-color="#fff"/><stop offset=".16" stop-color="#fff"/><stop offset=".19" stop-color="#e8286a"/><stop offset=".25" stop-color="#dc2060"/>
<stop offset=".27" stop-color="#c8a868"/><stop offset=".30" stop-color="#2a1e1c"/><stop offset=".40" stop-color="#1c1414"/><stop offset=".42" stop-color="#c8a868"/>
<stop offset=".46" stop-color="#c81858"/><stop offset=".58" stop-color="#e83070"/><stop offset=".68" stop-color="#ff6a98"/><stop offset=".76" stop-color="#f04880"/><stop offset=".82" stop-color="#c81858"/>
<stop offset=".84" stop-color="#d8c080"/><stop offset=".87" stop-color="#30201c"/><stop offset=".91" stop-color="#30201c"/><stop offset=".93" stop-color="#f0e0b0"/><stop offset=".96" stop-color="#d02060"/><stop offset="1" stop-color="#a00c40"/>
</linearGradient>
<radialGradient id="head" cx=".46" cy=".7" r=".75">
<stop offset="0" stop-color="#f8608c"/><stop offset=".4" stop-color="#e42c6c"/><stop offset=".8" stop-color="#c8185a"/><stop offset="1" stop-color="#a00c40"/>
</radialGradient>
<linearGradient id="gold" x1="0" x2="0" y1="0" y2="1">
<stop offset="0" stop-color="#2a1c08"/><stop offset=".22" stop-color="#8a6c34"/><stop offset=".4" stop-color="#e8d8a0"/><stop offset=".55" stop-color="#7a5c28"/><stop offset=".8" stop-color="#3a2810"/><stop offset="1" stop-color="#1a1004"/>
</linearGradient>
<linearGradient id="goldh" x1="0" x2="1" y1="0" y2="0">
<stop offset="0" stop-color="#2a1c08"/><stop offset=".14" stop-color="#c8b070"/><stop offset=".26" stop-color="#4a3414"/><stop offset=".42" stop-color="#2a1c0a"/><stop offset=".52" stop-color="#e8d8a8"/><stop offset=".66" stop-color="#6a5020"/><stop offset=".84" stop-color="#c8b478"/><stop offset="1" stop-color="#2a1c08"/>
</linearGradient>
<linearGradient id="ghead" x1="0" x2="1" y1="0" y2="0">
<stop offset="0" stop-color="#1c9c1c"/><stop offset=".45" stop-color="#2cc42c"/><stop offset="1" stop-color="#1a8c1a"/>
</linearGradient>
<linearGradient id="phead" x1="0" x2="1" y1="0" y2="1">
<stop offset="0" stop-color="#ec3c9c"/><stop offset=".45" stop-color="#d81e88"/><stop offset="1" stop-color="#b01070"/>
</linearGradient>
<clipPath id="gshaftclip"><path d="M476 265L497.5 266L475 398L468 400.5L453.5 396Z"/></clipPath>
</defs>
<!-- grid -->
<path d="M344.8 137.6L-32273.0 2474.4M344.8 137.6L1535.9 167.2M377.8 138.5L-29097.6 2457.0M315.1 139.8L1619.9 174.8M412.4 139.3L-25968.5 2439.8M281.5 142.2L1726.6 184.6M448.7 140.2L-22884.9 2422.8M243.2 144.9L1866.6 197.4M486.8 141.2L-19845.6 2406.1M199.2 148.1L2058.7 214.9M526.9 142.2L-16849.7 2389.7M148.0 151.7L2338.1 240.4M569.1 143.2L-13896.4 2373.5M87.9 156.0L2782.3 281.0M613.6 144.3L-10984.7 2357.5M16.1 161.2L3597.8 355.5M660.6 145.5L-8113.8 2341.7M-71.0 167.4L5584.4 536.9M710.4 146.7L-5282.7 2326.1M-179.0 175.2L17688.1 1642.3M763.1 148.0L-2490.7 2310.8M-316.3 185.0L22858.9 2745.9M819.0 149.4L263.1 2295.7M-496.9 197.9L14920.7 2801.6M878.5 150.9L2979.3 2280.7M-744.9 215.7L6640.5 2859.7M941.9 152.4L5658.8 2266.0M-1106.7 241.6L-2004.2 2920.4M1009.5 154.1L8302.4 2251.5M-1684.3 283.0L-11038.1 2983.8M1081.9 155.9L10910.7 2237.1M-2752.5 359.5L-20488.0 3050.2M1159.6 157.8L13484.4 2223.0M-5397.4 549.0L-25523.6 2619.7M1243.0 159.9L16024.2 2209.1M-22946.0 1806.2L-34045.6 2670.1M1333.0 162.1L18530.8 2195.3M1430.3 164.6L21004.9 2181.7M1535.9 167.2L23447.0 2168.3" stroke="#d9d9d9" stroke-width=".8" fill="none"/>
<!-- axes -->
<path d="M561.5 282L360 416" stroke="#5a5af0" stroke-width=".8" fill="none"/>
<path d="M561.5 282L873.1 316.4L1200 352" stroke="#ff6c6c" stroke-width=".8" fill="none"/>
<path d="M562 282L562 60" stroke="#a8c0a8" stroke-width=".9" fill="none"/>

<!-- GREEN OBJECT -->
<g>
<path d="M476 265L497.5 266L475 398L468 400.5L453.5 396Z" fill="#1a1a1a"/>
<path d="M476.3 265L479 265.1L456.5 396.9L453.5 396Z" fill="#22b422"/>
<path d="M481.8 265.2L490.2 265.6L467.3 400L459.3 397.7Z" fill="#24bc24"/>
<path d="M493.3 265.8L496.3 265.9L473.8 398.3L470.6 399.4Z" fill="#20a820"/>
<g clip-path="url(#gshaftclip)">
<path d="M561.5 282L360 416" stroke="#4a6ae0" stroke-width=".8" fill="none"/>
<path d="M266 326L584 381" stroke="#d8e8d8" stroke-width=".9" fill="none"/>
</g>
<path d="M480.5 243C483 232 490 223.5 496 221.8C501 223 505 233 504.4 246C501 249.5 486 248 480.5 243Z" fill="url(#ghead)"/>
<path d="M480.5 243C486 248 501 249.5 504.4 246L502.5 256L481 255Z" fill="#141414"/>
<ellipse cx="489.8" cy="260.5" rx="14.2" ry="6.6" transform="rotate(4 489.8 260.5)" fill="#181818"/>
<ellipse cx="489" cy="258.2" rx="9" ry="1.6" transform="rotate(4 489 258.2)" fill="#3a3a3a"/>
<rect x="485.5" y="250.2" width="7.6" height="7.6" fill="#3a3ad0" stroke="#7a7af8" stroke-width=".8"/>
<rect x="487.6" y="252.3" width="3.4" height="3.4" fill="#8a8aff"/>
</g>

<!-- CENTER OBJECT -->
<g>
<path d="M562.2 84.4C559.4 85.2 557.6 87.2 556.4 89C554.6 91.8 553.4 94 552.2 96.2C550.8 98.8 549.6 101 548.6 103.2C547.6 105.4 547.2 107 547.2 108.5C547.2 113 550.2 114.5 550.2 118.4L550.2 254C550.2 258 546.8 261 546.8 267.5C546.8 273 549.5 275.5 550.6 278C552 282 555 284.6 558 284.6L569 283.3C573 283 574 280.5 574.5 278C576.5 275.5 578.2 273 578.2 267.5C578.2 261 575.2 258 575.2 254L575.2 118.4C575.2 114.5 577.4 113 577.4 108.5C577.4 107 577 105.4 576 103.2C575 101 573.8 98.8 572.4 96.2C571.2 94 570 91.8 568.2 89C567 87.2 565 85.2 562.2 84.4Z" fill="#fff" stroke="#2a1850" stroke-width="1"/>
<path d="M550.6 278C552 282 555 284.6 558 284.6L569 283.3C573 283 574 280.5 574.5 278" fill="none" stroke="#c01030" stroke-width="1"/>
<path d="M549.4 114C548.4 112.4 547.2 111 547.2 108.5C547.2 107 547.6 105.4 548.6 103.2C549.6 101 550.8 98.8 552.2 96.2C553.4 94 554.6 91.8 556.4 89C557.6 87.2 559.4 85.2 562.2 84.4C565 85.2 567 87.2 568.2 89C570 91.8 571.2 94 572.4 96.2C573.8 98.8 575 101 576 103.2C577 105.4 577.4 107 577.4 108.5C577.4 111 576.6 112.4 575.8 114" fill="none" stroke="#b01444" stroke-width="1"/>
<rect x="550.6" y="113" width="24.2" height="144" fill="url(#shaft)"/>
<path d="M562.2 86C560 86.6 558.6 88.4 557.7 90C556.4 92.4 555.5 94.3 554.7 96C553.7 98.2 552.8 100.2 552 102C551 104.3 550 106.2 549.9 107.5C549.6 110.5 550.8 112.5 553 112.6L571 112.6C573.4 112.5 574.8 110.5 574.5 107.5C574.4 106.2 573.5 104.3 572.5 102C571.7 100.2 570.7 98.2 569.7 96C568.9 94.3 568 92.4 566.7 90C565.8 88.4 564.4 86.6 562.2 86Z" fill="url(#head)"/>
<path d="M557.2 95.5C555.4 99 554 104 554.8 108C557.8 106 559 99 559.6 93Z" fill="#fff0f4" opacity=".92"/>
<path d="M565.4 96.5C567.6 100 569.4 105 568.8 109C566 106.5 564.8 101 564.6 96Z" fill="#ffd4e2" opacity=".9"/>
<path d="M551 109.5C555 111.5 569 111.5 573.4 109.5L573.6 112.4L551 112.4Z" fill="#ff6a9a" opacity=".7"/>
<rect x="551.4" y="112.2" width="22.6" height="2" fill="#2a1a14"/>
<path d="M552.4 256.5L573.4 256.5L573.8 264.5L552 264.5Z" fill="url(#goldh)"/>
<ellipse cx="561.8" cy="269.4" rx="12.8" ry="5.2" fill="url(#gold)"/>
<ellipse cx="557.5" cy="267.5" rx="5.5" ry="1.3" fill="#f8f0d0" opacity=".9"/>
<ellipse cx="568.5" cy="267.8" rx="3" ry="1" fill="#f0e4b8" opacity=".8"/>
<rect x="556" y="274" width="5.2" height="7.8" fill="#3a2a10"/>
<rect x="557.6" y="274" width="1.4" height="7.8" fill="#b89858"/>
<rect x="569.3" y="274" width="3.5" height="7.5" fill="#5a4420"/>
<rect x="561.2" y="275" width="8" height="6.5" fill="#f8a8e8" opacity=".55"/>
</g>

<!-- RIGHT PINK OBJECT -->
<g>
<path d="M644.4 286.5L673 281L672 288L665.7 292L654.6 294.6L648 292Z" fill="#181818"/>
<path d="M645.5 288L655.5 288.9L655.5 293.6L648 291.7Z" fill="#d01c8c"/>
<path d="M660.5 288.9L672.2 283.3L671.3 287L661.6 292.6Z" fill="#c81888"/>
<path d="M627.5 243L657.4 236L668.8 264.5L637.2 270.5Z" fill="#1a1a1a"/>
<path d="M631.2 250L638.9 248.5L646.3 267.6L639.8 268.9Z" fill="#c81c88"/>
<path d="M646.3 247.4L655.5 242.8L662.9 261.1L651.8 265.7Z" fill="#d62090"/>
<ellipse cx="652.8" cy="275.6" rx="21.6" ry="10" transform="rotate(-8 652.8 275.6)" fill="#141414"/>
<ellipse cx="652.5" cy="270.6" rx="14.5" ry="3.2" transform="rotate(-8 652.5 270.6)" fill="#2c2c2c"/>
<path d="M633.3 209.6C637 209.2 640 210 642.6 211.5C646.5 213.5 649.5 216 651.8 218.5C654.5 221.5 656 224.5 657 227.8C658 230.5 658.3 232.5 657.9 234.3C657.6 236.5 656.8 238.3 655.5 239.8C653 242.5 649.5 244.5 645.3 245.4C641.5 246.5 637.5 246.8 634.2 246.3C631.2 245.8 628.8 244.9 626.8 243.5C624.5 241.9 623 239.8 622.2 237C621.5 235 621.2 233 621.3 230.6C621.3 227.5 621.8 224.8 622.7 222.2C623.6 219.2 625 216.5 626.8 213.9C628.6 211.4 630.5 210 633.3 209.6Z" fill="url(#phead)"/>
<path d="M631.5 212.5C627.5 215.5 625.3 222 625.8 229C629.5 223.5 632.5 218 636 213.5Z" fill="#f458b0" opacity=".65"/>
<path d="M626.8 243.5C628.8 244.9 631.2 245.8 634.2 246.3C637.5 246.8 641.5 246.5 645.3 245.4C649.5 244.5 653 242.5 655.5 239.8C652 241 640 244.5 633 243C629 242 625 240 622.2 237C623 239.8 624.5 241.9 626.8 243.5Z" fill="#9c0c64" opacity=".8"/>
</g>

<!-- overlay text -->
<text x="267.3" y="84.2" font-family="Liberation Sans" font-weight="bold" font-size="11.3" fill="#2c50c8">General-Purpose Lightning Dild</text>
<text x="267.5" y="97.1" font-family="Liberation Sans" font-weight="bold" font-size="11.3" fill="#1a1a8c">30,0 fps</text>
<!-- magnifier + move icons -->
<g fill="none" stroke="#0a3468"><circle cx="848.2" cy="80.7" r="4.4" stroke-width="1.7"/><path d="M851.7 84.4L854.8 87.2" stroke-linecap="round" stroke-width="2.6"/></g>
<g transform="translate(865.4 81.9)" fill="#5aa018"><path d="M0 -6.8L2.9 -3.4L.9 -3.4L.9 -.9L3.4 -.9L3.4 -2.9L6.6 0L3.4 2.9L3.4 .9L.9 .9L.9 3.4L2.9 3.4L0 6.8L-2.9 3.4L-.9 3.4L-.9 .9L-3.4 .9L-3.4 2.9L-6.6 0L-3.4 -2.9L-3.4 -.9L-.9 -.9L-.9 -3.4L-2.9 -3.4Z"/></g>
</svg></div>

<!-- ===== BOTTOM PANEL ===== -->
<div id="bottom" class="a" style="left:0;top:416px;width:960px;height:104px;background:#ededf3">
<div class="a" style="left:0;top:0.30000000000001137px;width:960px;height:.8px;background:#d4d4de"></div>
<div class="a" style="left:1.5px;top:1.1999999999999886px;width:957px;height:11px;background:#f3f3f8"></div>
<div class="a" style="left:12.4px;top:6.699999999999989px;width:940px;height:1.1px;background:#c6c6cc"></div>
<div class="a" style="left:0;top:12.199999999999989px;width:960px;height:.8px;background:#d8d8e2"></div>
<div class="a" style="left:0;top:29.399999999999977px;width:960px;height:.8px;background:#dcdce6"></div>
<div class="a" style="left:153px;top:13.600000000000023px;width:68.3px;height:14.6px;background:#0c7ad6"></div>
<div class="a" style="left:255px;top:13.600000000000023px;width:17.2px;height:14.6px;background:#0c7ad6"></div>
<div class="a" style="left:21.8px;top:30.600000000000023px;width:69.4px;height:69.4px;background:#fff"></div>
<div class="a" style="left:2.4px;top:30.600000000000023px;width:17.6px;height:13.6px;background:#f2f2f7;border:.5px solid #e0e0e8;box-sizing:border-box"></div>
<div class="a" style="left:2.4px;top:44.700000000000045px;width:17.6px;height:13.6px;background:#f2f2f7;border:.5px solid #e0e0e8;box-sizing:border-box"></div>
<div class="a" style="left:2.4px;top:58.80000000000001px;width:17.6px;height:13.6px;background:#f2f2f7;border:.5px solid #e0e0e8;box-sizing:border-box"></div>
<div class="a" style="left:2.4px;top:72.90000000000003px;width:17.6px;height:13.6px;background:#f2f2f7;border:.5px solid #e0e0e8;box-sizing:border-box"></div>
<div class="a" style="left:2.4px;top:87.0px;width:17.6px;height:13.6px;background:#f2f2f7;border:.5px solid #e0e0e8;box-sizing:border-box"></div>
<div class="a" style="left:92px;top:31.600000000000023px;width:8.4px;height:8px;background:#f4f4f9;border:.5px solid #e2e2ea;box-sizing:border-box"></div>
<div class="c" style="left:96.2px;top:33.19999999999999px;font-size:5.3px;color:#3a8ae0">R</div>
<div class="a" style="left:92px;top:40.0px;width:8.4px;height:8px;background:#f4f4f9;border:.5px solid #e2e2ea;box-sizing:border-box"></div>
<div class="c" style="left:96.2px;top:41.599999999999966px;font-size:5.3px;color:#444">X</div>
<div class="a" style="left:92px;top:48.400000000000034px;width:8.4px;height:8px;background:#f4f4f9;border:.5px solid #e2e2ea;box-sizing:border-box"></div>
<div class="c" style="left:96.2px;top:50.0px;font-size:5.3px;color:#444">Y</div>
<div class="a" style="left:92px;top:56.80000000000001px;width:8.4px;height:8px;background:#f4f4f9;border:.5px solid #e2e2ea;box-sizing:border-box"></div>
<div class="c" style="left:96.2px;top:58.39999999999998px;font-size:5.3px;color:#444">Z</div>
<div class="a" style="left:92px;top:65.20000000000005px;width:8.4px;height:8px;background:#f4f4f9;border:.5px solid #e2e2ea;box-sizing:border-box"></div>
<div class="c" style="left:96.2px;top:66.80000000000001px;font-size:5.3px;color:#444">M</div>
<div class="a" style="left:103.4px;top:31.399999999999977px;width:11.6px;height:11.6px;background:#f4f4f9;border:.5px solid #e2e2ea;box-sizing:border-box"></div>
<div class="c" style="left:109.2px;top:34.599999999999966px;font-size:5.5px;color:#555">1</div>
<div class="a" style="left:116.7px;top:31.399999999999977px;width:11.6px;height:11.6px;background:#f4f4f9;border:.5px solid #e2e2ea;box-sizing:border-box"></div>
<div class="c" style="left:122.5px;top:34.599999999999966px;font-size:5.5px;color:#555">2</div>
<div class="a" style="left:130.0px;top:31.399999999999977px;width:11.6px;height:11.6px;background:#f4f4f9;border:.5px solid #e2e2ea;box-sizing:border-box"></div>
<div class="c" style="left:135.8px;top:34.599999999999966px;font-size:5.5px;color:#555">3</div>
<div class="a" style="left:103.4px;top:44.799999999999955px;width:11.6px;height:11.6px;background:#f4f4f9;border:.5px solid #e2e2ea;box-sizing:border-box"></div>
<div class="c" style="left:109.2px;top:47.99999999999994px;font-size:5.5px;color:#555">4</div>
<div class="a" style="left:116.7px;top:44.799999999999955px;width:11.6px;height:11.6px;background:#f4f4f9;border:.5px solid #e2e2ea;box-sizing:border-box"></div>
<div class="c" style="left:122.5px;top:47.99999999999994px;font-size:5.5px;color:#555">5</div>
<div class="a" style="left:130.0px;top:44.799999999999955px;width:11.6px;height:11.6px;background:#f4f4f9;border:.5px solid #e2e2ea;box-sizing:border-box"></div>
<div class="c" style="left:135.8px;top:47.99999999999994px;font-size:5.5px;color:#555">6</div>
<div class="a" style="left:103.4px;top:58.60000000000002px;width:11.6px;height:11.6px;background:#f4f4f9;border:.5px solid #e2e2ea;box-sizing:border-box"></div>
<div class="a" style="left:130px;top:58.60000000000002px;width:11.6px;height:11.6px;background:#f4f4f9;border:.5px solid #e2e2ea;box-sizing:border-box"></div>
<div class="a" style="left:103.4px;top:72px;width:11.6px;height:11.6px;background:#f4f4f9;border:.5px solid #e2e2ea;box-sizing:border-box"></div>
<div class="a" style="left:116.7px;top:72px;width:11.6px;height:11.6px;background:#f4f4f9;border:.5px solid #e2e2ea;box-sizing:border-box"></div>
<div class="a" style="left:130px;top:72px;width:11.6px;height:11.6px;background:#f4f4f9;border:.5px solid #e2e2ea;box-sizing:border-box"></div>
<div class="a" style="left:103.4px;top:85.39999999999998px;width:11.6px;height:11.6px;background:#f4f4f9;border:.5px solid #e2e2ea;box-sizing:border-box"></div>
<div class="c" style="left:135.8px;top:75px;font-size:6px;font-weight:bold;color:#e01010;letter-spacing:-.3px">ALL</div>
<div class="c" style="left:109.4px;top:91.19999999999999px;font-size:4.6px;font-weight:bold;color:#e01010;letter-spacing:-.2px">ALL</div>
<div class="a" style="left:148.2px;top:34.60000000000002px;width:6.2px;height:6.2px;background:#fff;border:.5px solid #e2e2ea;box-sizing:border-box"></div>
<div class="t" style="left:156.2px;top:35.30000000000001px;font-size:5.35px;color:#444">Visible</div>
<div class="a" style="left:148.2px;top:42.60000000000002px;width:6.2px;height:6.2px;background:#fff;border:.5px solid #e2e2ea;box-sizing:border-box"></div>
<div class="t" style="left:156.2px;top:43.30000000000001px;font-size:5.35px;color:#444">Self Shadow</div>
<div class="a" style="left:148.2px;top:50.60000000000002px;width:6.2px;height:6.2px;background:#fff;border:.5px solid #e2e2ea;box-sizing:border-box"></div>
<div class="t" style="left:156.2px;top:51.30000000000001px;font-size:5.35px;color:#444">Add Blend</div>
<div class="a" style="left:148.2px;top:58.60000000000002px;width:6.2px;height:6.2px;background:#fff;border:.5px solid #e2e2ea;box-sizing:border-box"></div>
<div class="t" style="left:156.2px;top:59.30000000000001px;font-size:5.35px;color:#444">Physics</div>
<div class="a" style="left:181.6px;top:58.60000000000002px;width:6.2px;height:6.2px;background:#fff;border:.5px solid #e2e2ea;box-sizing:border-box"></div>
<div class="t" style="left:189.6px;top:59.30000000000001px;font-size:5.35px;color:#444">Still</div>
<div class="t" style="left:146.8px;top:67.39999999999998px;font-size:5.35px;color:#444">Scale</div>
<div class="t" style="left:146.8px;top:78.80000000000001px;font-size:5.35px;color:#444">Edge</div>
<div class="a" style="left:170.6px;top:65.19999999999999px;width:52.6px;height:9.4px;background:#fff"></div>
<div class="a" style="left:170.6px;top:76.60000000000002px;width:38px;height:9.4px;background:#fff"></div>
<div class="t" style="left:187.4px;top:67.5px;font-size:5.35px;color:#444">1,00</div>
<div class="t" style="left:181.4px;top:78.89999999999998px;font-size:5.35px;color:#444">0,0</div>
<div class="a" style="left:213.6px;top:76.60000000000002px;width:8.8px;height:8.8px;background:#000;border:.5px solid #ccc;box-sizing:border-box"></div>
<div class="sep" style="left:101.6px;top:30px;height:72px;background:#e0e0e9"></div>
<div class="sep" style="left:144.4px;top:30px;height:72px;background:#e0e0e9"></div>
<div class="sep" style="left:297.2px;top:30px;height:72px;background:#e0e0e9"></div>
<div class="sep" style="left:310.4px;top:30px;height:72px;background:#e6e6ee"></div>
<div class="a" style="left:298.4px;top:30.600000000000023px;width:11.4px;height:11.6px;background:#f3f3f8;border:.5px solid #e0e0e8;box-sizing:border-box"></div>
<div class="a" style="left:298.4px;top:42.60000000000002px;width:11.4px;height:11.6px;background:#f3f3f8;border:.5px solid #e0e0e8;box-sizing:border-box"></div>
<div class="a" style="left:298.4px;top:54.60000000000002px;width:11.4px;height:11.6px;background:#f3f3f8;border:.5px solid #e0e0e8;box-sizing:border-box"></div>
<div class="a" style="left:298.4px;top:66.60000000000002px;width:11.4px;height:11.6px;background:#f3f3f8;border:.5px solid #e0e0e8;box-sizing:border-box"></div>
<div class="a" style="left:314.4px;top:31px;width:25.2px;height:24.6px;background:#f5f5fa;border:.5px solid #e4e4ec;box-sizing:border-box"></div>
<div class="a" style="left:341.6px;top:31px;width:25.2px;height:24.8px;background:#0c7ad6"></div>
<div class="a" style="left:368.6px;top:31px;width:25.2px;height:24.6px;background:#f5f5fa;border:.5px solid #e4e4ec;box-sizing:border-box"></div>
<div class="a" style="left:0;top:100.79999999999995px;width:960px;height:1px;background:#e2e2ea"></div>
<svg width="960" height="104" viewBox="0 416 960 104" style="left:0;top:0"><defs><linearGradient id="gstar" x1="0" x2="0" y1="0" y2="1"><stop offset="0" stop-color="#9a6aa8"/><stop offset=".6" stop-color="#c87ab8"/><stop offset="1" stop-color="#e8a0c8"/></linearGradient><linearGradient id="gfig" x1="0" x2="0" y1="0" y2="1"><stop offset="0" stop-color="#d8e8f8"/><stop offset="1" stop-color="#8ab0dc"/></linearGradient><linearGradient id="gtrash" x1="0" x2="1" y1="0" y2="0"><stop offset="0" stop-color="#8c8c8c"/><stop offset=".5" stop-color="#c8c8c8"/><stop offset="1" stop-color="#8a8a8a"/></linearGradient></defs><g transform="translate(14.2 437.2) scale(0.66)"><g fill="url(#gfig)" stroke="#7a9cc0" stroke-width=".8" stroke-linejoin="round"><circle cx="-1.6" cy="-6" r="2.1"/><path d="M-4.4 -3.4H1.2C2.4 -3.4 3 -2.8 3.4 -1.8L4.8 1.6L3 2.4L1.4 -.4V7.4H-1V3H-2.2V7.4H-4.6V-.4L-5.8 2.4L-7.4 1.6L-6 -1.8C-5.6 -2.8 -5.4 -3.4 -4.4 -3.4Z"/></g><path d="M0.40000000000000036 3.4H8.4M4.4 -0.6000000000000001V7.4" stroke="#1414b4" stroke-width="2.1" fill="none"/></g><g transform="translate(31.7 437.2) scale(0.66)"><g transform="rotate(-27 -.4 -1.6)"><ellipse cx="-.4" cy="-.6" rx="7.4" ry="3.9" fill="#c4d8f6" stroke="#9ab4dc" stroke-width=".5"/><ellipse cx="-.4" cy="-1.9" rx="6.6" ry="2.7" fill="#3f6fe4"/><ellipse cx="-.4" cy="-.9" rx="4.6" ry="1.2" fill="#c4d8f6" opacity=".0"/></g><path d="M0 3.4H8M4 -0.6000000000000001V7.4" stroke="#1414b4" stroke-width="2.1" fill="none"/></g><g transform="translate(48.3 437.2) scale(0.66)"><rect x="-5.6" y="-3.6" width="11.2" height="11" rx="1" fill="url(#gtrash)" stroke="#6a6a6a" stroke-width=".6"/><rect x="-6.6" y="-5.6" width="13.2" height="2" fill="#9a9a9a" stroke="#666" stroke-width=".5"/><rect x="-2.2" y="-7.2" width="4.4" height="1.6" fill="none" stroke="#666" stroke-width=".8"/><path d="M-2.8 -2v8M0 -2v8M2.8 -2v8" stroke="#777" stroke-width=".8"/></g><g transform="translate(65.3 437.2) scale(0.66)"><g transform="translate(1.2 0)" fill="none" stroke-linecap="round" stroke-linejoin="round"><path d="M-0.4 -3.6L0.6 1L3.6 3.6L5.4 7M0.6 1L-2.2 3.4L-2.6 6.6M-0.2 -3L-4 -1.6L-6.4 -3.6M0 -3.2L3.2 -1.6L5.4 -0.2" stroke="#94640a" stroke-width="3.5"/><circle cx="-1.6" cy="-6" r="2.2" fill="#94640a"/><path d="M-0.4 -3.6L0.6 1L3.6 3.6L5.4 7M0.6 1L-2.2 3.4L-2.6 6.6M-0.2 -3L-4 -1.6L-6.4 -3.6M0 -3.2L3.2 -1.6L5.4 -0.2" stroke="#f4b428" stroke-width="2.3"/><circle cx="-1.6" cy="-6" r="1.6" fill="#f4b428"/></g><path d="M-7.199999999999999 4.6H-2.4M-4.8 2.1999999999999997V7.0" stroke="#2a2ad0" stroke-width="1.4" fill="none"/></g><g transform="translate(82.5 437.2) scale(0.66)"><g transform="translate(1.5 0)" fill="none" stroke-linecap="round" stroke-linejoin="round"><path d="M-3.4 0.6L-6.6 -3.6M-1.6 -0.6L-3.6 -6M0.6 -1L0 -7M2.8 -0.4L3.6 -5.6M4 3L7 -0.6" stroke="#94640a" stroke-width="3.1"/><path d="M-4 0.4C-5 4.6 -2.4 7 0.8 7C4 7 6 4.4 5 0.6Z" fill="#94640a" stroke="#94640a" stroke-width="1.2"/><path d="M-3.4 0.6L-6.6 -3.6M-1.6 -0.6L-3.6 -6M0.6 -1L0 -7M2.8 -0.4L3.6 -5.6M4 3L7 -0.6" stroke="#f4b428" stroke-width="1.9"/><path d="M-4 0.4C-5 4.6 -2.4 7 0.8 7C4 7 6 4.4 5 0.6Z" fill="#f4b428"/></g><path d="M-7.300000000000001 4.4H-2.5000000000000004M-4.9 2.0000000000000004V6.800000000000001" stroke="#2a2ad0" stroke-width="1.4" fill="none"/></g><g transform="translate(99.7 437.2) scale(0.66)"><rect x="-2.2" y="-7.2" width="9" height="11.6" fill="#fff" stroke="#b0b8c8" stroke-width=".7"/><rect x="-3.6" y="-5.6" width="9" height="11.6" fill="#fcfcfc" stroke="#a8b0c0" stroke-width=".7"/><path d="M-.2 2.8V-3.2L4 -4.2V1.8" fill="none" stroke="#2a8a2a" stroke-width="1.2"/><ellipse cx="-1.2" cy="3" rx="1.4" ry="1.1" fill="#2a8a2a"/><ellipse cx="3" cy="2" rx="1.4" ry="1.1" fill="#2a8a2a"/><path d="M-7.4 5.4H-3.0M-5.2 3.2V7.6000000000000005" stroke="#2a2ad0" stroke-width="1.3" fill="none"/></g><g transform="translate(116.3 437.2) scale(0.66)"><rect x="-6.3" y="-7" width="12.6" height="14" fill="#f4f4f4"/><rect x="-6.3" y="-7" width="3.2" height="14" fill="#161616"/><rect x="3.1" y="-7" width="3.2" height="14" fill="#161616"/><path d="M-4.7 -6v13M4.7 -6v13" stroke="#e8e8e8" stroke-width="1.2" stroke-dasharray="1.3 1.5"/><path d="M-1.5 4.6L6.5 -5.4" stroke="#3a8ad8" stroke-width="3.4" stroke-linecap="butt"/><path d="M-1.5 4.6L0.26 2.40" stroke="#f0c890" stroke-width="2.72"/><circle cx="-1.5" cy="4.6" r=".7" fill="#333"/></g><g transform="translate(133 437.2) scale(0.66)"><path d="M-5 -4.6L-1.4 -7.2V1.6L-5 -1Z" fill="#f0e060" stroke="#6a6a3a" stroke-width=".6"/><rect x="-6.4" y="-4.6" width="1.8" height="3.6" fill="#8a8a6a"/><path d="M0 -5.8C1.6 -4.2 1.6 -1.4 0 .2M1.8 -7.2C4.2 -4.8 4.2 -.8 1.8 1.6" fill="none" stroke="#c8b830" stroke-width=".8"/><path d="M-6 1.2H2.6V-1L7.4 3.2L2.6 7.4V5.2H-6Z" fill="#5aa0e0" stroke="#2a5a9a" stroke-width=".6"/></g><path d="M143.2 436h3.6l-1.8 2.2zM274 436h3.6l-1.8 2.2zM352.6 436h3.6l-1.8 2.2zM580.2 436h3.6l-1.8 2.2z" fill="#777"/><path d="M157.6 432.2H164.8V440.2L163 442H159.4L157.6 440.2Z" fill="#fff" stroke="#111" stroke-width="1"/><path d="M160 434h2.4M161.2 434v5.4M160 439.4h2.4" stroke="#1a2a8a" stroke-width=".9"/><g fill="none" stroke="#0a58b0" stroke-width="1.6"><circle cx="176.4" cy="439" r="2.8"/><path d="M178.4 437L181.4 434M178.8 433.6H181.8V436.6"/></g><circle cx="196.2" cy="437.6" r="3.8" fill="#0a0a0a"/><ellipse cx="197.2" cy="436.4" rx="1.3" ry=".9" fill="#ddd"/><path d="M212.6 432.6L217 439L212.6 441.8L208.2 439Z" fill="#fff" stroke="#ddd" stroke-width=".4"/><path d="M212.6 437.4V432.4" stroke="#2a9a2a" stroke-width="1"/><path d="M212.6 437.4L216.4 439.6" stroke="#d82020" stroke-width="1"/><path d="M212.6 437.4L208.8 439.6" stroke="#2a4ad8" stroke-width="1"/><rect x="229.6" y="431.8" width="5.2" height="4.4" fill="#555" stroke="#333" stroke-width=".5"/><rect x="230.4" y="432.6" width="3.6" height="2.4" fill="#b8b8b8"/><g fill="none" stroke="#1a6ad0" stroke-width=".9"><circle cx="226" cy="434.2" r="1.2"/><circle cx="226.4" cy="440.4" r="1.2"/><circle cx="232.4" cy="441.4" r="1.2"/><path d="M226.2 435.4V439.2M227.4 440.6L231.2 441.2M227 435L231.6 440.4"/></g><g transform="rotate(-28 246.2 437.4)"><ellipse cx="246.2" cy="437.4" rx="4.6" ry="2.6" fill="none" stroke="#5a9ae8" stroke-width="1.5"/></g><rect x="258.2" y="432.4" width="11" height="9.2" fill="#c4cfe2" stroke="#8a9ab8" stroke-width=".6"/><path d="M260.4 434H267V435.8H264.6V440.2H262.8V435.8H260.4Z" fill="#2a3a5e"/><g fill="#1c2470"><rect x="286" y="432.2" width="1.5" height="10.2"/><path d="M288.8 432.2L296.4 437.3L288.8 442.4Z" fill="#3a4698" stroke="#1c2470" stroke-width=".8"/></g><path d="M304.4 432.2L312 437.3L304.4 442.4Z" fill="#3a4698" stroke="#1c2470" stroke-width=".8"/><rect x="320.4" y="432.4" width="8.4" height="6.2" fill="#d8dce8" stroke="#444" stroke-width=".8"/><path d="M324.6 434.6L330 438.6L324.6 442.6Z" fill="#3a4698" stroke="#1c2470" stroke-width=".6"/><g fill="none" stroke-width="1.6"><path d="M338.6 436.4A3.8 3.8 0 0 1 345 434.6" stroke="#5a3ac8"/><path d="M345.6 438.4A3.8 3.8 0 0 1 339.2 440.2" stroke="#2a5ad8"/></g><path d="M343.6 432.6L346.8 435.4L343 436.4Z" fill="#5a3ac8"/><path d="M341 442L337.8 439.4L341.6 438.4Z" fill="#2a5ad8"/><path d="M361.2 431v12.6M588 431v12.6" stroke="#d4d4de" stroke-width=".7"/><g fill="none" stroke="#2aa02a" stroke-width="1.7"><path d="M366.6 436.4A4 4 0 0 1 373.4 434.4"/><path d="M374.4 438.4A4 4 0 0 1 367.6 440.4"/></g><path d="M372 432.2L375.4 435.2L371.4 436.2Z" fill="#2aa02a"/><path d="M369 442.6L365.6 439.6L369.6 438.6Z" fill="#2aa02a"/><path d="M383.6 437.6L386.4 441L391.4 433.4" fill="none" stroke="#a4a4a8" stroke-width="1.6"/><rect x="400" y="432.8" width="6.6" height="8.6" fill="#d8c8a0" stroke="#a08858" stroke-width=".6"/><rect x="401.8" y="432" width="3" height="1.6" fill="#888"/><rect x="403.2" y="435.6" width="5.4" height="6.6" fill="#f2f2f6" stroke="#8a8aa0" stroke-width=".5"/><g fill="none" stroke="#a0a0a4" stroke-width=".9"><path d="M418.4 432.6L423 440M424.2 432.6L419.6 440"/><circle cx="419" cy="441" r="1.3"/><circle cx="423.6" cy="441" r="1.3"/></g><rect x="434" y="432.6" width="5.6" height="6.8" fill="#b8b8bc"/><rect x="436.6" y="435" width="5.6" height="6.8" fill="#c8c8cc" stroke="#a4a4a8" stroke-width=".5"/><path d="M451.6 433.2L459.6 441.6M459.6 433.2L451.6 441.6" stroke="#d83030" stroke-width="1.5"/><rect x="467" y="434" width="10" height="6.6" rx="1" fill="#e8eef8" stroke="#3a5aa8" stroke-width="1"/><path d="M484 434H492V439H488L486 441V439H484Z" fill="#c0c0c4"/><path d="M499.4 434H507.4V439H505.4V441L503.4 439H499.4Z" fill="#c0c0c4"/><g fill="none" stroke="#1a6ad0" stroke-width="1.4"><circle cx="517.8" cy="438" r="2.4"/><path d="M519.6 436.2L522 433.8M519.8 433.4H522.4V436"/></g><path d="M518.4 438.6L520.4 441.4L523.6 436.4" fill="none" stroke="#c81818" stroke-width="1.2"/><rect x="532" y="432.6" width="8" height="7.6" fill="#e8e8ec" stroke="#333" stroke-width=".9"/><rect x="533.4" y="434.6" width="8" height="7.4" fill="#f4f4f8" stroke="#444" stroke-width=".7"/><path d="M535 438L537 440.6L540.2 435.8" fill="none" stroke="#c81818" stroke-width="1.2"/><g stroke="#444" stroke-width=".6"><rect x="548.6" y="432.6" width="8" height="3.4" fill="#e8c8c8"/><rect x="549.8" y="435.4" width="8" height="3.4" fill="#f4f4f8"/><rect x="551" y="438.2" width="8" height="3.4" fill="#e8c8c8"/></g><path d="M550 434.4h5M552.4 440h5" stroke="#c81818" stroke-width=".8"/><rect x="565.4" y="432" width="4.6" height="10" fill="#f4ece0" stroke="#555" stroke-width=".8"/><path d="M568.6 438.4L570.8 441.6L574.4 435.2" fill="none" stroke="#c81818" stroke-width="1.3"/><path d="M594.6 432.4V441.8H603.6" fill="none" stroke="#2a3ab8" stroke-width="1.1"/><path d="M594.8 441.6C598 441 600 437.6 600.4 433M596.4 436.2L602.8 436.2" fill="none" stroke="#d83030" stroke-width=".9"/><path d="M610.4 432.6H618.4V435H615.6V441.6H613.2V435H610.4Z" fill="#222"/><path d="M613.6 438.6L618 441.8L614.4 443Z" fill="#e8a020"/><g fill="#7aaad4" stroke="#2a4a74" stroke-width=".9" transform="translate(12 453) scale(.74)"><circle cx="0" cy="-5.8" r="2"/><path d="M-2.6 -3.2H2.6L5 1.4L3.6 2.2L2.2 -.4V7.6H.4V3.2H-.4V7.6H-2.2V-.4L-3.6 2.2L-5 1.4Z"/></g><ellipse cx="12" cy="467" rx="4.4" ry="2.7" fill="none" stroke="#2a4a74" stroke-width="2.1"/><ellipse cx="12" cy="467" rx="4.4" ry="2.7" fill="none" stroke="#6a9aca" stroke-width="1.1"/><g fill="#5a8ab8" stroke="#162a44" stroke-width=".6"><rect x="7.2" y="481.6" width="3.6" height="4.4" transform="rotate(-25 9 483.8)" fill="#1a2a40"/><rect x="9.6" y="478.4" width="3.6" height="5.6" transform="rotate(-25 11.4 481.2)"/><rect x="12.4" y="475.8" width="3" height="4.6" transform="rotate(-25 13.9 478.1)"/></g><path d="M12.20 490.20L13.79 493.42L17.34 493.93L14.77 496.43L15.37 499.97L12.20 498.30L9.03 499.97L9.63 496.43L7.06 493.93L10.61 493.42Z" fill="#6a9acc" stroke="#1a3a60" stroke-width="0.9" stroke-linejoin="round"/><text x="12.2" y="513.8" font-family="Liberation Serif" font-weight="bold" font-size="13" text-anchor="middle" fill="#3a6898" stroke="#1a3454" stroke-width=".35">T</text><g fill="none" stroke="#2aa02a" stroke-width="1.3"><path d="M106.2 479.6A3 3 0 0 1 111.4 478.2"/><path d="M112.2 481.2A3 3 0 0 1 107 482.6"/></g><path d="M110.4 476.6L113 478.8L110 479.6Z" fill="#2aa02a"/><path d="M108 484.2L105.4 482L108.4 481.2Z" fill="#2aa02a"/><g transform="translate(135.8 480.4)"><circle r="2.4" fill="none" stroke="#555" stroke-width="1.4"/><g stroke="#555" stroke-width="1.1"><path d="M0 -3.7V3.7M-3.7 0H3.7M-2.6 -2.6L2.6 2.6M-2.6 2.6L2.6 -2.6"/></g><circle r="1.1" fill="#f4f4f9"/></g><rect x="106" y="490.4" width="4" height="5.4" fill="#c4c4c8"/><rect x="108" y="492.2" width="4" height="5.4" fill="#d4d4d8" stroke="#aaa" stroke-width=".4"/><rect x="119.2" y="490.2" width="5" height="6.6" fill="#dcc8a0" stroke="#a08858" stroke-width=".5"/><rect x="121.6" y="492.6" width="4" height="5" fill="#ececf0" stroke="#999" stroke-width=".4"/><rect x="106" y="503" width="4" height="5" fill="#c4c4c8"/><rect x="108" y="504.4" width="4" height="4" fill="#d4d4d8" stroke="#aaa" stroke-width=".4"/><path d="M149.5 453.6L150.89999999999998 455.40000000000003L153.39999999999998 451.8" fill="none" stroke="#555" stroke-width=".8"/><path d="M149.5 461.6L150.89999999999998 463.40000000000003L153.39999999999998 459.8" fill="none" stroke="#555" stroke-width=".8"/><path d="M149.5 477.6L150.89999999999998 479.40000000000003L153.39999999999998 475.8" fill="none" stroke="#555" stroke-width=".8"/><path d="M218.6 484.4L220 482.9L221.4 484.4M218.6 487.4L220 488.9L221.4 487.4M203.6 495.8L205 494.3L206.4 495.8M203.6 498.8L205 500.3L206.4 498.8" fill="none" stroke="#555" stroke-width=".8"/><path d="M151.4 507.2H205" stroke="#3a8ce0" stroke-width=".9"/><rect x="150.4" y="504.6" width="2.2" height="5.2" fill="#eef4fc" stroke="#3a8ce0" stroke-width=".7"/><rect x="213.4" y="502.6" width="9" height="9" fill="#f4f4f9" stroke="#e0e0e8" stroke-width=".5"/><path d="M215.6 507.2L217.6 509.6L220.8 504.6" fill="none" stroke="#1a8a1a" stroke-width="1.4"/><rect x="213.4" y="448" width="9.4" height="9.4" fill="#f4f4f9" stroke="#e0e0e8" stroke-width=".5"/><circle cx="218.1" cy="452.7" r="3.4" fill="#e8f0fc" stroke="#3a7ad8" stroke-width=".9"/><path d="M218.1 452v2.8" stroke="#2a5ac0" stroke-width="1.1"/><circle cx="218.1" cy="450.8" r=".6" fill="#2a5ac0"/><rect x="213.4" y="459.6" width="9.4" height="9.4" fill="#f4f4f9" stroke="#e0e0e8" stroke-width=".5"/><circle cx="218.1" cy="464.6" r="3.6" fill="#5a8ad8" stroke="#2a4a8a" stroke-width=".6"/><path d="M215.6 466.6L217.6 462.4L219 464.6L221.6 461" fill="none" stroke="#f8e020" stroke-width="1.5"/><rect x="299.4" y="449" width="9.4" height="6.8" rx=".6" fill="#b4b4b4" stroke="#4a4a4a" stroke-width=".9"/><rect x="301" y="450.4" width="6.2" height="4" fill="#8c8c8c"/><g fill="none" stroke="#1a6ad0" stroke-width="1.9"><circle cx="302.8" cy="466.2" r="2.5"/><path d="M304.6 464.4L307.6 461.4M304.8 460.8H308.2V464.2"/></g><circle cx="304.2" cy="475.8" r="4.2" fill="#f4f4ee" stroke="#333" stroke-width=".9"/><circle cx="302.6" cy="474.8" r=".65" fill="#333"/><circle cx="305.8" cy="474.8" r=".65" fill="#333"/><path d="M302 477.2Q304.2 479 306.4 477.2" fill="none" stroke="#333" stroke-width=".6"/><path d="M301.4 478.6L299.8 481.8L303.4 480Z" fill="#f4f4ee" stroke="#333" stroke-width=".6"/><path d="M300 489.4C299.6 486 301.4 484 303.6 484C305.6 484 306.6 484.8 307.8 486.4C308.8 487.8 308.4 490.6 307 492C305.6 493.4 302.2 493.2 301 491.6Z" fill="#ecd8a4" stroke="#6a5a3a" stroke-width=".7"/><path d="M302.2 486.2v3M304 485.4v3.2M305.8 486.2v2.8M301 489.6Q304 491 307 489" fill="none" stroke="#6a5a3a" stroke-width=".5"/><g transform="translate(326.9 0)"><path d="M-3.2 457.4L3.2 457.4L3.4 465L-3.4 465Z" fill="#2a2024"/><rect x="-1.5" y="458.4" width="3" height="6.4" fill="#d81c78"/><path d="M-2.6 465.6L2.6 465.6L2 469.6L-.4 470L-2 469Z" fill="#30262a"/><rect x="-1" y="467.6" width="1.8" height="2.2" fill="#d81c78"/><ellipse cx="0" cy="466" rx="4.3" ry="1.9" fill="#1c1618"/><path d="M-.2 448.6C-2 449.4 -4 452.8 -4 455.6C-4 457 -3 457.8 0 457.8C3 457.8 4 457 4 455.6C4 452.8 2 449.4 -.2 448.6Z" fill="#e61e82"/><path d="M-1.6 451C-2.6 452.4 -3 454 -2.8 455.4C-1.8 454.4 -1.2 452.6 -.8 450.8Z" fill="#f860a8" opacity=".7"/></g><g transform="translate(354 0)"><path d="M-3.2 457.4L3.2 457.4L3.4 465L-3.4 465Z" fill="#2a2024"/><rect x="-1.5" y="458.4" width="3" height="6.4" fill="#d81c78"/><path d="M-2.6 465.6L2.6 465.6L2 469.6L-.4 470L-2 469Z" fill="#30262a"/><rect x="-1" y="467.6" width="1.8" height="2.2" fill="#d81c78"/><ellipse cx="0" cy="466" rx="4.3" ry="1.9" fill="#1c1618"/><path d="M-.2 448.6C-2 449.4 -4 452.8 -4 455.6C-4 457 -3 457.8 0 457.8C3 457.8 4 457 4 455.6C4 452.8 2 449.4 -.2 448.6Z" fill="#e61e82"/><path d="M-1.6 451C-2.6 452.4 -3 454 -2.8 455.4C-1.8 454.4 -1.2 452.6 -.8 450.8Z" fill="#f860a8" opacity=".7"/></g><g transform="translate(380.9 0)"><path d="M-3.2 457.4L3.2 457.4L3.4 465L-3.4 465Z" fill="#2a2024"/><rect x="-1.5" y="458.4" width="3" height="6.4" fill="#d81c78"/><path d="M-2.6 465.6L2.6 465.6L2 469.6L-.4 470L-2 469Z" fill="#30262a"/><rect x="-1" y="467.6" width="1.8" height="2.2" fill="#d81c78"/><ellipse cx="0" cy="466" rx="4.3" ry="1.9" fill="#1c1618"/><path d="M-.2 448.6C-2 449.4 -4 452.8 -4 455.6C-4 457 -3 457.8 0 457.8C3 457.8 4 457 4 455.6C4 452.8 2 449.4 -.2 448.6Z" fill="#e61e82"/><path d="M-1.6 451C-2.6 452.4 -3 454 -2.8 455.4C-1.8 454.4 -1.2 452.6 -.8 450.8Z" fill="#f860a8" opacity=".7"/></g></svg>
</div>

<!-- ===== NAVY BAR ===== -->
<div class="a" style="left:0;top:519.6px;width:960px;height:20.4px;background:#00365f"></div>

<!-- ===== DIALOG ===== -->
<div id="dialog" class="a" style="left:618px;top:318px;width:340.4px;height:201.6px;background:#ededf3;border:.8px solid #c4c4d0;box-sizing:border-box;box-shadow:0 0 1.5px rgba(80,80,100,.35)">
<div class="t" style="left:14.400000000000045px;top:5.599999999999977px;font-size:6.7px;color:#333">Effect Assign</div>
<div class="a" style="left:266.59999999999997px;top:21.800000000000022px;width:62.6px;height:12px;background:#f3f3f8;border:.6px solid #dcdce6;box-sizing:border-box"></div>
<div class="t" style="left:284.59999999999997px;top:25.399999999999988px;font-size:5.35px;color:#3c3c3c">Add New Effect</div>
<div class="a" style="left:11.599999999999977px;top:37.800000000000026px;width:317.2px;height:159.6px;background:#fff;border:.6px solid #dedee8;box-sizing:border-box"></div>
<div class="a" style="left:11.599999999999977px;top:37.800000000000026px;width:317.2px;height:10.0px;background:#f7f7fb;border-bottom:.6px solid #dcdce6;box-sizing:border-box"></div>
<div class="t" style="left:22.400000000000045px;top:40.000000000000014px;font-size:5.35px;color:#3c3c3c">Name</div>
<div class="t" style="left:126.40000000000005px;top:40.000000000000014px;font-size:5.35px;color:#3c3c3c">Effect</div>
<div class="a" style="left:39.2px;top:47.800000000000026px;width:85.6px;height:10.5px;background:#c5d9f3"></div>
<div class="a" style="left:247.59999999999997px;top:47.800000000000026px;width:81px;height:10.5px;background:#c5d9f3"></div>
<div class="a" style="left:124.99999999999996px;top:47.60000000000004px;width:122.6px;height:10.7px;background:#fff;border:.8px solid #9a9aa4;box-sizing:border-box"></div>
<div class="sep" style="left:21.400000000000045px;top:37.800000000000026px;height:41.5px;background:#dedee8;width:.6px"></div>
<div class="sep" style="left:124.80000000000003px;top:37.800000000000026px;height:41.5px;background:#dedee8;width:.6px"></div>
<div class="sep" style="left:247.59999999999997px;top:37.800000000000026px;height:41.5px;background:#dedee8;width:.6px"></div>
<div class="sep" style="left:288.40000000000003px;top:37.800000000000026px;height:41.5px;background:#dedee8;width:.6px"></div>
<div class="a" style="left:21.400000000000045px;top:58.300000000000026px;width:307.4px;height:.6px;background:#dedee8"></div>
<div class="a" style="left:21.400000000000045px;top:68.80000000000003px;width:307.4px;height:.6px;background:#dedee8"></div>
<div class="a" style="left:21.400000000000045px;top:79.30000000000003px;width:307.4px;height:.6px;background:#dedee8"></div>
<div class="t" style="left:40.59999999999998px;top:50.60000000000004px;font-size:5.3px;color:#333;letter-spacing:-.05px">General-Purpose Lightning Dildo...</div>
<div class="t" style="left:126.40000000000005px;top:50.60000000000004px;font-size:5.3px;color:#333">(Default)</div>
<div class="c" style="left:267.99999999999994px;top:50.60000000000004px;font-size:5.3px;color:#333">Default</div>
<div class="c" style="left:308.40000000000003px;top:50.60000000000004px;font-size:5.3px;color:#333">No Render</div>
<div class="t" style="left:40.59999999999998px;top:61.10000000000004px;font-size:5.3px;color:#333;letter-spacing:-.05px">General-Purpose Lightning Dildo...</div>
<div class="t" style="left:126.40000000000005px;top:61.10000000000004px;font-size:5.3px;color:#333">(Default)</div>
<div class="c" style="left:267.99999999999994px;top:61.10000000000004px;font-size:5.3px;color:#333">Default</div>
<div class="c" style="left:308.40000000000003px;top:61.10000000000004px;font-size:5.3px;color:#333">No Render</div>
<div class="t" style="left:40.59999999999998px;top:71.60000000000004px;font-size:5.3px;color:#333;letter-spacing:-.05px">General-Purpose Lightning Dildo...</div>
<div class="t" style="left:126.40000000000005px;top:71.60000000000004px;font-size:5.3px;color:#333">(Default)</div>
<div class="c" style="left:267.99999999999994px;top:71.60000000000004px;font-size:5.3px;color:#333">Default</div>
<div class="c" style="left:308.40000000000003px;top:71.60000000000004px;font-size:5.3px;color:#333">No Render</div>
<svg width="340" height="201" viewBox="618.8 318.8 340 201" style="left:0;top:0"><defs><linearGradient id="dstar" x1="0" x2="0" y1="0" y2="1"><stop offset="0" stop-color="#9a6aa8"/><stop offset=".6" stop-color="#c87ab8"/><stop offset="1" stop-color="#e8a0c8"/></linearGradient><linearGradient id="dfig" x1="0" x2="0" y1="0" y2="1"><stop offset="0" stop-color="#d8e8f8"/><stop offset="1" stop-color="#8ab0dc"/></linearGradient><linearGradient id="dtrash" x1="0" x2="1" y1="0" y2="0"><stop offset="0" stop-color="#8c8c8c"/><stop offset=".5" stop-color="#c8c8c8"/><stop offset="1" stop-color="#8a8a8a"/></linearGradient></defs><path d="M626.40 324.40L627.34 326.31L629.44 326.61L627.92 328.09L628.28 330.19L626.40 329.20L624.52 330.19L624.88 328.09L623.36 326.61L625.46 326.31Z" fill="#b87ab0" stroke="#222" stroke-width="0.8" stroke-linejoin="round"/><path d="M626.8 328H628.4V326.8L630.8 329L628.4 331.2V330H626.8Z" fill="#4ac86a" stroke="#1a5a2a" stroke-width=".4"/><path d="M944.2 326.2L947.6 329.8M947.6 326.2L944.2 329.8" stroke="#222" stroke-width="1"/><path d="M892.60 341.80L893.83 344.30L896.59 344.70L894.60 346.65L895.07 349.40L892.60 348.10L890.13 349.40L890.60 346.65L888.61 344.70L891.37 344.30Z" fill="#c07ab4" stroke="#222" stroke-width="0.8" stroke-linejoin="round"/><path d="M893 348.6H897M895 346.6V350.6" stroke="#1414b4" stroke-width="1.2" fill="none"/><path d="M634.2 370.4L636.2 371.9L634.2 373.4Z" fill="#444"/><path d="M643.8 369.90000000000003L646.4 371.90000000000003L643.8 373.90000000000003Z" fill="none" stroke="#666" stroke-width=".6"/><path d="M653.4 368.3C652.6 368.90000000000003 652.4 370.3 652.4 371.1L654.4 371.1C654.4 370.3 654.2 368.90000000000003 653.4 368.3Z" fill="#e8206a"/><rect x="652.5" y="371.1" width="1.8" height="3.8" fill="#2a1418"/><rect x="653" y="371.1" width=".8" height="3.8" fill="#d01860"/><path d="M643.8 380.40000000000003L646.4 382.40000000000003L643.8 384.40000000000003Z" fill="none" stroke="#666" stroke-width=".6"/><path d="M653.4 378.8C652.6 379.40000000000003 652.4 380.8 652.4 381.6L654.4 381.6C654.4 380.8 654.2 379.40000000000003 653.4 378.8Z" fill="#e8206a"/><rect x="652.5" y="381.6" width="1.8" height="3.8" fill="#2a1418"/><rect x="653" y="381.6" width=".8" height="3.8" fill="#d01860"/><path d="M643.8 390.90000000000003L646.4 392.90000000000003L643.8 394.90000000000003Z" fill="none" stroke="#666" stroke-width=".6"/><path d="M653.4 389.3C652.6 389.90000000000003 652.4 391.3 652.4 392.1L654.4 392.1C654.4 391.3 654.2 389.90000000000003 653.4 389.3Z" fill="#e8206a"/><rect x="652.5" y="392.1" width="1.8" height="3.8" fill="#2a1418"/><rect x="653" y="392.1" width=".8" height="3.8" fill="#d01860"/><path d="M860.8 371.2h2.8l-1.4 1.7z" fill="#555"/></svg>
</div>

</div><!--endroot--></body></html>
